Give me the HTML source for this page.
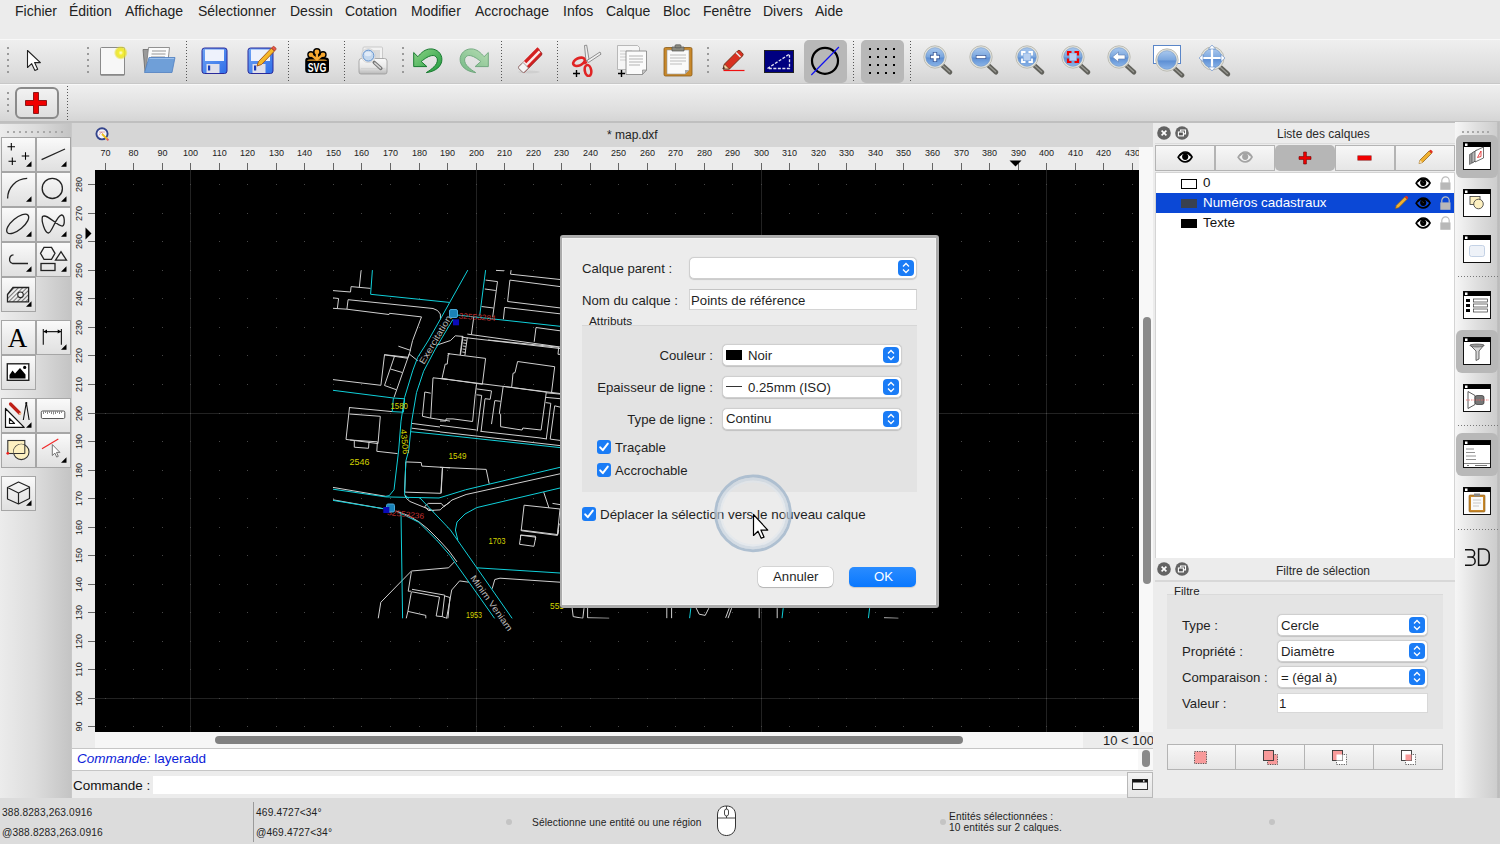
<!DOCTYPE html>
<html><head><meta charset="utf-8">
<style>
*{box-sizing:border-box}
body{margin:0;width:1500px;height:844px;position:relative;overflow:hidden;background:#ececec;font-family:"Liberation Sans",sans-serif;color:#1e1e1e}
.a{position:absolute}
.t{position:absolute;white-space:pre;line-height:1}
.menu{font-size:14px;color:#222;top:4px}
.tb{position:absolute;left:0;width:1500px;background:linear-gradient(#efefef,#dedede 70%,#d4d4d4);border-top:1px solid #f8f8f8;border-bottom:1px solid #c8c8c8}
.sepd{position:absolute;width:2px;background:repeating-linear-gradient(#9a9a9a 0 2px,transparent 2px 6px)}
.sepf{position:absolute;width:1px;background:repeating-linear-gradient(#555 0 1px,transparent 1px 3px)}
.tool{position:absolute;width:35px;height:35px;border:1px solid #a6a6a6;background:linear-gradient(#fafafa,#ececec 50%,#e0e0e0)}
.combo{position:absolute;background:#fff;border:1px solid #cfcfcf;border-radius:5px;box-shadow:0 0.5px 1px rgba(0,0,0,.15)}
.step{position:absolute;right:2px;top:2px;width:16px;bottom:2px;background:#1a7cf6;border-radius:4px}
.lbl{font-size:13.2px;color:#1f1f1f}
.rl{font-size:9px;color:#222}
.cb{position:absolute;width:14px;height:14px;background:#1a7cf6;border-radius:3px}
</style></head><body>
<!-- MENU -->
<div class="t menu" style="left:15px">Fichier</div>
<div class="t menu" style="left:69px">Édition</div>
<div class="t menu" style="left:125px">Affichage</div>
<div class="t menu" style="left:198px">Sélectionner</div>
<div class="t menu" style="left:290px">Dessin</div>
<div class="t menu" style="left:345px">Cotation</div>
<div class="t menu" style="left:411px">Modifier</div>
<div class="t menu" style="left:475px">Accrochage</div>
<div class="t menu" style="left:563px">Infos</div>
<div class="t menu" style="left:606px">Calque</div>
<div class="t menu" style="left:663px">Bloc</div>
<div class="t menu" style="left:703px">Fenêtre</div>
<div class="t menu" style="left:763px">Divers</div>
<div class="t menu" style="left:815px">Aide</div>

<!-- TOOLBARS -->
<div class="tb" style="top:39px;height:45px"></div>
<div class="tb" style="top:84px;height:39px"></div>

<svg width="0" height="0" style="position:absolute">
<defs>
<linearGradient id="gBlueLens" x1="0" y1="0" x2="0" y2="1"><stop offset="0" stop-color="#a9c8ee"/><stop offset="0.5" stop-color="#7aa6de"/><stop offset="0.55" stop-color="#5d8fd4"/><stop offset="1" stop-color="#8ab4e8"/></linearGradient>
<linearGradient id="gGreen" x1="0" y1="0" x2="1" y2="1"><stop offset="0" stop-color="#8fd488"/><stop offset="1" stop-color="#1d9a3c"/></linearGradient>
<linearGradient id="gFloppy" x1="0" y1="0" x2="1" y2="1"><stop offset="0" stop-color="#6fa4f4"/><stop offset="1" stop-color="#2f6ee8"/></linearGradient>
<radialGradient id="gGlow"><stop offset="0" stop-color="#fffde0"/><stop offset="0.35" stop-color="#f4ee30"/><stop offset="0.7" stop-color="#e8e020" stop-opacity=".8"/><stop offset="1" stop-color="#e8e020" stop-opacity="0"/></radialGradient>
<symbol id="lens" viewBox="0 0 32 32"><path d="M19 20l8 7.2" stroke="#62625c" stroke-width="4.6" stroke-linecap="round"/><path d="M19.8 20.6l6.8 6.2" stroke="#9a9a94" stroke-width="1.2" stroke-linecap="round"/><circle cx="12" cy="12" r="11.2" fill="#e4e4dc" stroke="#b8b8b0" stroke-width="0.9"/><circle cx="12" cy="12" r="9.3" fill="url(#gBlueLens)" stroke="#6f94c4" stroke-width="0.6"/></symbol>
</defs></svg>
<!-- toolbar 1 separators -->
<div class="sepd" style="left:7px;top:47px;height:28px"></div>
<div class="sepd" style="left:87px;top:47px;height:28px"></div>
<div class="sepf" style="left:186px;top:41px;height:41px"></div>
<div class="sepf" style="left:288px;top:41px;height:41px"></div>
<div class="sepf" style="left:344px;top:41px;height:41px"></div>
<div class="sepd" style="left:402px;top:47px;height:28px"></div>
<div class="sepf" style="left:501px;top:41px;height:41px"></div>
<div class="sepf" style="left:557px;top:41px;height:41px"></div>
<div class="sepd" style="left:707px;top:47px;height:28px"></div>
<div class="sepf" style="left:853px;top:41px;height:41px"></div>
<div class="sepf" style="left:910px;top:41px;height:41px"></div>
<!-- select arrow -->
<svg class="a" style="left:26px;top:49px" width="16" height="24" viewBox="0 0 16 24"><path d="M1.5 1.5v17l4.2-3.8 3.2 6.8 2.8-1.3-3.1-6.6h5.8z" fill="#fff" stroke="#222" stroke-width="1.1" stroke-linejoin="round"/></svg>
<!-- new doc -->
<svg class="a" style="left:98px;top:45px" width="30" height="32" viewBox="0 0 30 32"><rect x="2.5" y="2.5" width="24" height="27.5" rx="1" fill="#f2f2f2" stroke="#8a8a8a" stroke-width="1"/><rect x="3" y="3" width="23" height="26.5" fill="#fafafa" opacity=".6"/><path d="M2.5 29.8h24" stroke="#777" stroke-width="1.2"/><circle cx="22.8" cy="7.8" r="7" fill="url(#gGlow)"/></svg>
<!-- open -->
<svg class="a" style="left:142px;top:46px" width="34" height="29" viewBox="0 0 34 29"><path d="M1 3.5h6l1 2h5v20H3z" fill="#9a9a9a" stroke="#666" stroke-width=".8"/><path d="M6.5 1.5h21l-2 18h-21z" fill="#fbfbfb" stroke="#777" stroke-width=".8"/><path d="M10 5h14M9.5 8h14M9 11h14" stroke="#b8b8b8" stroke-width="1.4"/><path d="M7 11.5h26l-3 15H2.5z" fill="#6f9fd8" stroke="#4f7fc0" stroke-width=".8"/><path d="M7.5 12.5h24.5" stroke="#9cc0ec" stroke-width="1"/></svg>
<!-- save -->
<svg class="a" style="left:201px;top:47px" width="27" height="28" viewBox="0 0 27 28"><rect x="1" y="1" width="25" height="25.5" rx="2.5" fill="url(#gFloppy)" stroke="#2a2a9a" stroke-width="1"/><rect x="4" y="2.5" width="19" height="11.5" fill="#eef2fc"/><rect x="5.5" y="17" width="13" height="9" fill="#e0e0ea"/><rect x="7" y="18.5" width="2.2" height="5" fill="#1a3cb8"/></svg>
<!-- save as -->
<svg class="a" style="left:247px;top:45px" width="31" height="30" viewBox="0 0 31 30"><rect x="1" y="3" width="25" height="25.5" rx="2.5" fill="url(#gFloppy)" stroke="#2a2a9a" stroke-width="1"/><rect x="4" y="4.5" width="19" height="11.5" fill="#eef2fc"/><rect x="5.5" y="19" width="13" height="9" fill="#e0e0ea"/><rect x="7" y="20.5" width="2.2" height="5" fill="#1a3cb8"/><path d="M10 21l1.5-4.5 13-13.5 3 3-13 13.5z" fill="#f6b828" stroke="#a0521a" stroke-width=".9"/><path d="M24.5 3l3 3 1.2-1.2a1.3 1.3 0 0 0 0-1.8l-1.2-1.2a1.3 1.3 0 0 0-1.8 0z" fill="#e8584a" stroke="#a0321a" stroke-width=".7"/></svg>
<!-- svg logo -->
<svg class="a" style="left:300px;top:44px" width="35" height="34" viewBox="0 0 35 34"><g stroke="#000" stroke-linecap="round"><path d="M16.9 7.9V15.5M10.9 10.7L16.9 15.5M23 10.7L16.9 15.5" stroke-width="5.5"/></g><circle cx="16.9" cy="7.9" r="3.9" fill="#000"/><circle cx="10.9" cy="10.7" r="3.7" fill="#000"/><circle cx="23" cy="10.7" r="3.7" fill="#000"/><rect x="5.2" y="13.6" width="23.8" height="15.3" rx="3.2" fill="#000"/><g stroke="#f6a830" stroke-linecap="round"><path d="M16.9 7.9V15.5M10.9 10.7L16.9 15.5M23 10.7L16.9 15.5" stroke-width="2.3"/></g><circle cx="16.9" cy="7.9" r="2.4" fill="#f6a830"/><circle cx="10.9" cy="10.7" r="2.3" fill="#f6a830"/><circle cx="23" cy="10.7" r="2.3" fill="#f6a830"/><path d="M6.8 16.8Q8 15.2 11 15.4H23Q26 15.2 27.4 16.8z" fill="#f6a830"/><text x="17" y="28" text-anchor="middle" font-family="Liberation Sans" font-weight="bold" font-size="13" fill="#fff" textLength="18.5" lengthAdjust="spacingAndGlyphs">SVG</text></svg>
<!-- print preview -->
<svg class="a" style="left:358px;top:46px" width="30" height="30" viewBox="0 0 30 30"><defs><linearGradient id="gPr" x1="0" y1="0" x2="0" y2="1"><stop offset="0" stop-color="#fafafa"/><stop offset=".55" stop-color="#e8e8e8"/><stop offset="1" stop-color="#b8b8b8"/></linearGradient></defs><rect x="5" y="1" width="19.5" height="14" rx="1" fill="#f2f2f2" stroke="#c0c0c0" stroke-width=".8"/><rect x="12" y="4" width="10" height="9" fill="#dcdcdc"/><path d="M1 15a2.5 2.5 0 0 1 2.5-2.5h23a2.5 2.5 0 0 1 2.5 2.5v11a2 2 0 0 1-2 2H3a2 2 0 0 1-2-2z" fill="url(#gPr)" stroke="#9a9a9a" stroke-width=".8"/><path d="M3 22.5h24" stroke="#d0d0d0" stroke-width=".8"/><path d="M16.3 16.5l6.5 5.8" stroke="#777" stroke-width="3.6" stroke-linecap="round"/><path d="M16.8 17l5.6 5" stroke="#d8d8d8" stroke-width="1.6" stroke-linecap="round"/><circle cx="10.4" cy="9.6" r="7" fill="#f0f0f0" stroke="#c8c8c8" stroke-width=".7"/><circle cx="10.4" cy="9.6" r="5.5" fill="#c4d8ee" stroke="#5f8fcc" stroke-width="1"/><ellipse cx="10" cy="8" rx="3.5" ry="2.2" fill="#e8f0fa" opacity=".8"/></svg>
<!-- undo -->
<svg class="a" style="left:413px;top:48px" width="30" height="26" viewBox="0 0 30 26"><path d="M0.7 18.6V4.5L4.9 8.7C8 5 12 0.9 17.8 0.9C24 0.9 28.9 5.5 28.9 11.4C28.9 18 23 23.5 13.3 24.6C19 21 24.4 17 24.4 12C24.4 9.5 22.5 7.5 20.2 7.5C16 7.5 12 10.5 8.2 13.5L13.9 18.6Z" fill="url(#gGreen)" stroke="#187a30" stroke-width="1" stroke-linejoin="round"/></svg>
<!-- redo -->
<svg class="a" style="left:459px;top:48px" width="30" height="26" viewBox="0 0 30 26" opacity=".55"><g transform="translate(30,0) scale(-1,1)"><path d="M0.7 18.6V4.5L4.9 8.7C8 5 12 0.9 17.8 0.9C24 0.9 28.9 5.5 28.9 11.4C28.9 18 23 23.5 13.3 24.6C19 21 24.4 17 24.4 12C24.4 9.5 22.5 7.5 20.2 7.5C16 7.5 12 10.5 8.2 13.5L13.9 18.6Z" fill="url(#gGreen)" stroke="#187a30" stroke-width="1" stroke-linejoin="round"/></g></svg>
<!-- eraser -->
<svg class="a" style="left:516px;top:47px" width="28" height="28" viewBox="0 0 28 28"><ellipse cx="13" cy="25" rx="11" ry="1.5" fill="#ccc" opacity=".8"/><path d="M3 19.5L19.5 2.5a2 2 0 0 1 2.8 0l3 3a2 2 0 0 1 0 2.8L8.8 25a1.5 1.5 0 0 1-2.1 0L3 21.6a1.5 1.5 0 0 1 0-2.1z" fill="#d42020" stroke="#8a1010" stroke-width=".8"/><path d="M5.5 16.5l15-15.2 4 4-15 15.2z" fill="#fff" opacity=".9"/><path d="M8 14l13.5-13.7 2.3 2.3L10.3 16.3z" fill="#d42020"/><path d="M3 19.5l4-4 5.5 5.5-4 4a1.5 1.5 0 0 1-2.1 0L3 21.6a1.5 1.5 0 0 1 0-2.1z" fill="#f4f4f4" stroke="#8a8a8a" stroke-width=".8"/></svg>
<!-- scissors -->
<svg class="a" style="left:571px;top:44px" width="31" height="33" viewBox="0 0 31 33"><path d="M15 17L13.5 1.5l2.2-.3 2.3 14.3z" fill="#f0f0f0" stroke="#777" stroke-width=".8"/><path d="M16 16.5L29 8l1 2.2-12.5 8.3z" fill="#f0f0f0" stroke="#777" stroke-width=".8"/><ellipse cx="8" cy="17.8" rx="6.2" ry="3.6" transform="rotate(-25 8 17.8)" fill="none" stroke="#e02424" stroke-width="2.6"/><ellipse cx="17" cy="26.5" rx="3.2" ry="5.5" transform="rotate(-10 17 26.5)" fill="none" stroke="#e02424" stroke-width="2.6"/><path d="M13 19.5l3 -1.5" stroke="#e02424" stroke-width="2.5"/><path d="M5.5 26v7M2 29.5h7" stroke="#000" stroke-width="1.4"/></svg>
<!-- copy -->
<svg class="a" style="left:616px;top:44px" width="33" height="34" viewBox="0 0 33 34"><path d="M1.5 1.5h20l2 2v22h-22z" fill="#f6f6f6" stroke="#aaa" stroke-width=".8"/><path d="M4 7h12M4 10h12M4 13h12M4 16h12" stroke="#ccc" stroke-width="1.1"/><path d="M10 7h20.5v19l-4 4.5H10z" fill="#fbfbfb" stroke="#8a8a8a" stroke-width=".9"/><path d="M13 12h14M13 15h14M13 18h14M13 21h11" stroke="#b4b4b4" stroke-width="1.1"/><path d="M26.5 30.5v-4.5h4z" fill="#c8c8c8" stroke="#8a8a8a" stroke-width=".7"/><path d="M5.5 26v7M2 29.5h7" stroke="#000" stroke-width="1.4"/></svg>
<!-- paste -->
<svg class="a" style="left:663px;top:44px" width="30" height="33" viewBox="0 0 30 33"><rect x="1" y="3.5" width="28" height="28.5" rx="1.5" fill="#c8882a" stroke="#8a5a18" stroke-width=".8"/><path d="M4 6h22v20l-4 4H4z" fill="#fafafa" stroke="#999" stroke-width=".6"/><path d="M7 11h16M7 14h16M7 17h16M7 20h12" stroke="#bbb" stroke-width="1.1"/><path d="M22 30v-4h4z" fill="#aaa"/><path d="M9 3h12v4H9z" fill="#8a8a80" stroke="#555" stroke-width=".7"/><rect x="12" y="0.8" width="6" height="3" rx="1" fill="#8a8a80" stroke="#555" stroke-width=".7"/></svg>
<!-- pencil line -->
<svg class="a" style="left:721px;top:49px" width="24" height="24" viewBox="0 0 24 24"><path d="M2.5 21.5h21" stroke="#f01010" stroke-width="1.2"/><path d="M2 20l1.5-5L16.5 2a2 2 0 0 1 2.8 0l2.2 2.2a2 2 0 0 1 0 2.8L8.5 20z" fill="#d83020" stroke="#6a2a10" stroke-width=".9"/><path d="M15 3.5l4.5 4.5" stroke="#e8e8e8" stroke-width="1.6"/><path d="M2 20l1.5-5 5 5z" fill="#f2d2a0" stroke="#6a2a10" stroke-width=".7"/><path d="M2 20l.7-2.3 1.6 1.6z" fill="#222"/></svg>
<!-- blue rect -->
<svg class="a" style="left:764px;top:50px" width="30" height="23" viewBox="0 0 30 23"><rect x="0.5" y="0.5" width="29" height="22" fill="#000080" stroke="#222" stroke-width="1"/><path d="M3.5 18.5L25.5 4v14.5z" fill="none" stroke="#e0e0f0" stroke-width="1.3" stroke-dasharray="3 1.5"/></svg>
<!-- active circle -->
<div class="a" style="left:804px;top:40px;width:43px;height:43px;background:#b8b8b8;border-radius:5px"></div>
<svg class="a" style="left:809px;top:45px" width="32" height="32" viewBox="0 0 32 32"><circle cx="16" cy="15.8" r="13" fill="none" stroke="#000" stroke-width="2.2"/><path d="M2.3 30L29.9 2" stroke="#1010f0" stroke-width="1.2"/></svg>
<!-- grid -->
<div class="a" style="left:861px;top:40px;width:43px;height:43px;background:#b8b8b8;border-radius:5px"></div>
<svg class="a" style="left:868px;top:47px" width="28" height="28"><g fill="#000"><rect x="1" y="1" width="2" height="2"/><rect x="9" y="1" width="2" height="2"/><rect x="17" y="1" width="2" height="2"/><rect x="25" y="1" width="2" height="2"/><rect x="1" y="9" width="2" height="2"/><rect x="9" y="9" width="2" height="2"/><rect x="17" y="9" width="2" height="2"/><rect x="25" y="9" width="2" height="2"/><rect x="1" y="17" width="2" height="2"/><rect x="9" y="17" width="2" height="2"/><rect x="17" y="17" width="2" height="2"/><rect x="25" y="17" width="2" height="2"/><rect x="1" y="25" width="2" height="2"/><rect x="9" y="25" width="2" height="2"/><rect x="17" y="25" width="2" height="2"/><rect x="25" y="25" width="2" height="2"/></g></svg>
<!-- zoom in -->
<svg class="a" style="left:923px;top:45px" width="32" height="32" viewBox="0 0 32 32"><use href="#lens"/><path d="M12 7v10M7 12h10" stroke="#3a5a9a" stroke-width="4.4"/><path d="M12 7.8v8.4M7.8 12h8.4" stroke="#fff" stroke-width="2.6"/></svg>
<svg class="a" style="left:969px;top:45px" width="32" height="32" viewBox="0 0 32 32"><use href="#lens"/><path d="M6.8 12h10.4" stroke="#3a5a9a" stroke-width="4"/><path d="M7.5 12h9" stroke="#fff" stroke-width="2.4"/></svg>
<svg class="a" style="left:1015px;top:45px" width="32" height="32" viewBox="0 0 32 32"><use href="#lens"/><rect x="8.5" y="8.5" width="7" height="7" fill="#b8d0f0"/><path d="M7 10.5V7h3.5M13.5 7H17v3.5M17 13.5V17h-3.5M10.5 17H7v-3.5" fill="none" stroke="#fff" stroke-width="1.8"/></svg>
<svg class="a" style="left:1061px;top:45px" width="32" height="32" viewBox="0 0 32 32"><use href="#lens"/><rect x="8.5" y="8.5" width="7" height="7" fill="#b8d0f0"/><path d="M7 10.5V7h3.5M13.5 7H17v3.5M17 13.5V17h-3.5M10.5 17H7v-3.5" fill="none" stroke="#f00000" stroke-width="2.2"/></svg>
<svg class="a" style="left:1107px;top:45px" width="32" height="32" viewBox="0 0 32 32"><use href="#lens"/><path d="M5.5 12l6-5v3h6.5v4h-6.5v3z" fill="#fff" stroke="#5a7ab0" stroke-width=".6"/></svg>
<svg class="a" style="left:1152px;top:44px" width="34" height="34" viewBox="0 0 34 34"><rect x="1.5" y="1.5" width="27" height="18" fill="#fff" stroke="#5a86c8" stroke-width="1"/><g transform="translate(3,4)"><use href="#lens" width="32" height="32"/></g></svg>
<svg class="a" style="left:1199px;top:45px" width="33" height="33" viewBox="0 0 33 33"><use href="#lens" x="1" y="1"/><path d="M13 1v24M1 13h24" stroke="#fff" stroke-width="2.2"/><path d="M13 0l-3.5 4h7zM13 26l-3.5-4h7zM0 13l4-3.5v7zM26 13l-4-3.5v7z" fill="#fff" stroke="#5a86c8" stroke-width=".6"/></svg>
<!-- toolbar 2 -->
<div class="sepd" style="left:7px;top:92px;height:22px"></div>
<div class="a" style="left:15px;top:87px;width:44px;height:32px;border:2px solid #8a8a8a;border-radius:6px;background:linear-gradient(#f2f2f2,#dedede)"></div>
<svg class="a" style="left:25px;top:92px" width="22" height="22" viewBox="0 0 22 22"><path d="M8.5 0.5h5v8h8v5h-8v8h-5v-8h-8v-5h8z" fill="#f00000" stroke="#700" stroke-width=".8"/></svg>
<div class="sepf" style="left:67px;top:86px;height:34px"></div>

<!-- LEFT TOOLBOX -->
<div class="a" style="left:0;top:122px;width:71px;height:676px;background:linear-gradient(90deg,#ececec,#dcdcdc 50%,#c4c4c4)"></div>

<!-- LEFT TOOLBOX ICONS -->
<div class="a" style="left:0;top:122px;width:71px;height:2px;background:#c4c4c4"></div>
<div class="a" style="left:7px;top:131px;width:58px;height:2px;background:repeating-linear-gradient(90deg,#a8a8a8 0 2px,transparent 2px 6px)"></div>
<div class="tool" style="left:1px;top:137px"></div><div class="tool" style="left:36px;top:137px"></div>
<div class="tool" style="left:1px;top:172px"></div><div class="tool" style="left:36px;top:172px"></div>
<div class="tool" style="left:1px;top:207px"></div><div class="tool" style="left:36px;top:207px"></div>
<div class="tool" style="left:1px;top:242px"></div><div class="tool" style="left:36px;top:242px"></div>
<div class="tool" style="left:1px;top:277px"></div>
<div class="tool" style="left:1px;top:320px"></div><div class="tool" style="left:36px;top:320px"></div>
<div class="tool" style="left:1px;top:355px"></div>
<div class="tool" style="left:1px;top:398px"></div><div class="tool" style="left:36px;top:398px"></div>
<div class="tool" style="left:1px;top:433px"></div><div class="tool" style="left:36px;top:433px"></div>
<div class="tool" style="left:1px;top:476px"></div>
<svg class="a" style="left:0;top:122px" width="72" height="400" viewBox="0 122 72 400">
<g fill="#000">
<path d="M26 166.8h5.5v-5.5z"/><path d="M61 166.8h5.5v-5.5z"/>
<path d="M26 201.8h5.5v-5.5z"/><path d="M61 201.8h5.5v-5.5z"/>
<path d="M26 236.8h5.5v-5.5z"/><path d="M61 236.8h5.5v-5.5z"/>
<path d="M26 271.8h5.5v-5.5z"/><path d="M61 271.8h5.5v-5.5z"/>
<path d="M26 306.8h5.5v-5.5z"/>
<path d="M61 349.8h5.5v-5.5z"/>
<path d="M26 427.8h5.5v-5.5z"/>
<path d="M61 462.8h5.5v-5.5z"/>
<path d="M26 505.8h5.5v-5.5z"/>
</g>
<g fill="none" stroke="#222" stroke-width="1.3">
<path d="M11.3 143v7.5M7.5 146.7h7.5M25.5 152.3v7.5M21.7 156h7.5M12.3 157.5v7.5M8.5 161.2h7.5" stroke="#000" stroke-width="1.05"/>
<path d="M41.6 159.6L65 149"/>
<path d="M7.6 198.5A20 20 0 0 1 27.2 178.4"/>
<circle cx="52.3" cy="188.4" r="10.1"/>
<ellipse cx="17.7" cy="223.9" rx="13.5" ry="5.8" transform="rotate(-40 17.7 223.9)"/>
<path d="M42.5 216.5C41 221 45 233 48.5 233 52 233 56 216 61.5 215 65 214.5 65 225 62.5 226 58 227 47 213 42.5 216.5z"/>
<path d="M13.5 254.8C9 255 8 262 12.5 263.5H28"/>
<path d="M40.5 253.3l3.5-6h7.5l3.5 6-3.5 6h-7.5z M55.5 260.2l5.5-8.5 5.5 8.5z"/>
<rect x="41" y="263.5" width="14" height="7"/>
</g>
<defs><pattern id="hatch" width="3" height="3" patternUnits="userSpaceOnUse" patternTransform="rotate(45)"><rect width="1" height="3" fill="#777"/></pattern></defs>
<path d="M7.5 294.5l5.5-7h15.6v14.3H7.5z" fill="url(#hatch)" stroke="#222" stroke-width="1.3"/>
<circle cx="20.5" cy="294.8" r="2.8" fill="#f4f4f4" stroke="#222" stroke-width="1.1"/>
<text x="17.5" y="347.3" text-anchor="middle" font-family="Liberation Serif" font-size="27" fill="#000">A</text>
<path d="M43.3 329v15.7M61.4 329v15.7M43.5 331.6h17.7" fill="none" stroke="#222" stroke-width="1.2"/>
<path d="M43.5 331.6l3.5-2v4zM61.2 331.6l-3.5-2v4z" fill="#000"/>
<rect x="7.3" y="363.8" width="21.5" height="16.5" fill="#fff" stroke="#222" stroke-width="1.4"/>
<path d="M9.5 378.5v-3.5l3-4.5 2.5 3 5-5.5 5.5 6.5v4z" fill="#000"/>
<circle cx="24.7" cy="367.4" r="1.6" fill="#000"/>
<path d="M5.5 408.5v18.9h18.7z M9.5 418.5v5h5z" fill="#fff" stroke="#111" stroke-width="1.2" stroke-linejoin="round"/>
<path d="M10.5 404l9 9" stroke="#c02018" stroke-width="3.2" stroke-linecap="round"/><path d="M19.5 413l1.5 1.5" stroke="#f0c090" stroke-width="2.2"/>
<path d="M26.3 402.5l-3 17.5M26.3 402.5l2.8 17.5" fill="none" stroke="#111" stroke-width="1.1"/><circle cx="26.3" cy="403" r="1.1" fill="#111"/>
<rect x="41.3" y="411" width="23.5" height="7.5" rx="1.3" fill="#fff" stroke="#555" stroke-width="1"/>
<path d="M43.5 411.5v2.5M45.5 411.5v1.5M47.5 411.5v2.5M49.5 411.5v1.5M51.5 411.5v2.5M53.5 411.5v3M55.5 411.5v2.5M57.5 411.5v1.5M59.5 411.5v2.5M61.5 411.5v1.5" stroke="#555" stroke-width=".7"/>
<rect x="7.8" y="440.5" width="17" height="13" fill="#fdf0c0" stroke="#333" stroke-width="1.1"/>
<circle cx="21.3" cy="451.9" r="7.7" fill="#fdf0c0" fill-opacity=".95" stroke="#333" stroke-width="1.1"/>
<path d="M13.6 451.9A7.7 7.7 0 0 1 24.8 445.2V453.5H13.7z" fill="#fdf0c0"/><path d="M13.6 453.5H24.8V444.7" fill="none" stroke="#333" stroke-width="1"/>
<circle cx="7.8" cy="453.3" r="1.4" fill="#f02020"/>
<path d="M42 448.8l16.3-9.7" stroke="#f02828" stroke-width="1.2"/>
<path d="M52.3 444.5v11l2.6-2.4 1.8 4 1.6-.8-1.8-3.9h3.4z" fill="#fff" stroke="#666" stroke-width=".9"/>
<path d="M7.5 487.5l11-5.5 11 5v11.5l-11 5.5-11-5z M7.5 487.5l11 5.5 11-5.5 M18.5 493v11" fill="none" stroke="#222" stroke-width="1.2" stroke-linejoin="round"/>
</svg>

<!-- DOC WINDOW -->
<div class="a" style="left:71px;top:122px;width:1083px;height:676px;background:#ececec;border-left:1px solid #c8c8c8"></div>
<div class="a" style="left:72px;top:122px;width:1081px;height:25px;background:#d6d6d6"></div>
<div class="t" style="left:607px;top:129px;font-size:12px;color:#1e1e1e">* map.dxf</div>
<div class="a" style="left:72px;top:147px;width:1081px;height:23px;background:#ececec"></div>
<div class="a" style="left:72px;top:170px;width:23px;height:562px;background:#ececec"></div>
<svg class="a" style="left:95px;top:170px" width="1044" height="562" viewBox="95 170 1044 562">
<rect x="95" y="170" width="1044" height="562" fill="#000"/>
<rect x="190" y="170" width="1" height="562" fill="#222"/><rect x="476" y="170" width="1" height="562" fill="#222"/><rect x="761" y="170" width="1" height="562" fill="#222"/><rect x="1046" y="170" width="1" height="562" fill="#222"/><rect x="95" y="698" width="1044" height="1" fill="#222"/><rect x="95" y="413" width="1044" height="1" fill="#222"/><path fill="#474747" d="M105 726h1v1h-1zM105 698h1v1h-1zM105 669h1v1h-1zM105 641h1v1h-1zM105 612h1v1h-1zM105 584h1v1h-1zM105 555h1v1h-1zM105 527h1v1h-1zM105 498h1v1h-1zM105 470h1v1h-1zM105 441h1v1h-1zM105 413h1v1h-1zM105 384h1v1h-1zM105 355h1v1h-1zM105 327h1v1h-1zM105 298h1v1h-1zM105 270h1v1h-1zM105 241h1v1h-1zM105 213h1v1h-1zM105 184h1v1h-1zM133 726h1v1h-1zM133 698h1v1h-1zM133 669h1v1h-1zM133 641h1v1h-1zM133 612h1v1h-1zM133 584h1v1h-1zM133 555h1v1h-1zM133 527h1v1h-1zM133 498h1v1h-1zM133 470h1v1h-1zM133 441h1v1h-1zM133 413h1v1h-1zM133 384h1v1h-1zM133 355h1v1h-1zM133 327h1v1h-1zM133 298h1v1h-1zM133 270h1v1h-1zM133 241h1v1h-1zM133 213h1v1h-1zM133 184h1v1h-1zM162 726h1v1h-1zM162 698h1v1h-1zM162 669h1v1h-1zM162 641h1v1h-1zM162 612h1v1h-1zM162 584h1v1h-1zM162 555h1v1h-1zM162 527h1v1h-1zM162 498h1v1h-1zM162 470h1v1h-1zM162 441h1v1h-1zM162 413h1v1h-1zM162 384h1v1h-1zM162 355h1v1h-1zM162 327h1v1h-1zM162 298h1v1h-1zM162 270h1v1h-1zM162 241h1v1h-1zM162 213h1v1h-1zM162 184h1v1h-1zM190 726h1v1h-1zM190 698h1v1h-1zM190 669h1v1h-1zM190 641h1v1h-1zM190 612h1v1h-1zM190 584h1v1h-1zM190 555h1v1h-1zM190 527h1v1h-1zM190 498h1v1h-1zM190 470h1v1h-1zM190 441h1v1h-1zM190 413h1v1h-1zM190 384h1v1h-1zM190 355h1v1h-1zM190 327h1v1h-1zM190 298h1v1h-1zM190 270h1v1h-1zM190 241h1v1h-1zM190 213h1v1h-1zM190 184h1v1h-1zM219 726h1v1h-1zM219 698h1v1h-1zM219 669h1v1h-1zM219 641h1v1h-1zM219 612h1v1h-1zM219 584h1v1h-1zM219 555h1v1h-1zM219 527h1v1h-1zM219 498h1v1h-1zM219 470h1v1h-1zM219 441h1v1h-1zM219 413h1v1h-1zM219 384h1v1h-1zM219 355h1v1h-1zM219 327h1v1h-1zM219 298h1v1h-1zM219 270h1v1h-1zM219 241h1v1h-1zM219 213h1v1h-1zM219 184h1v1h-1zM247 726h1v1h-1zM247 698h1v1h-1zM247 669h1v1h-1zM247 641h1v1h-1zM247 612h1v1h-1zM247 584h1v1h-1zM247 555h1v1h-1zM247 527h1v1h-1zM247 498h1v1h-1zM247 470h1v1h-1zM247 441h1v1h-1zM247 413h1v1h-1zM247 384h1v1h-1zM247 355h1v1h-1zM247 327h1v1h-1zM247 298h1v1h-1zM247 270h1v1h-1zM247 241h1v1h-1zM247 213h1v1h-1zM247 184h1v1h-1zM276 726h1v1h-1zM276 698h1v1h-1zM276 669h1v1h-1zM276 641h1v1h-1zM276 612h1v1h-1zM276 584h1v1h-1zM276 555h1v1h-1zM276 527h1v1h-1zM276 498h1v1h-1zM276 470h1v1h-1zM276 441h1v1h-1zM276 413h1v1h-1zM276 384h1v1h-1zM276 355h1v1h-1zM276 327h1v1h-1zM276 298h1v1h-1zM276 270h1v1h-1zM276 241h1v1h-1zM276 213h1v1h-1zM276 184h1v1h-1zM304 726h1v1h-1zM304 698h1v1h-1zM304 669h1v1h-1zM304 641h1v1h-1zM304 612h1v1h-1zM304 584h1v1h-1zM304 555h1v1h-1zM304 527h1v1h-1zM304 498h1v1h-1zM304 470h1v1h-1zM304 441h1v1h-1zM304 413h1v1h-1zM304 384h1v1h-1zM304 355h1v1h-1zM304 327h1v1h-1zM304 298h1v1h-1zM304 270h1v1h-1zM304 241h1v1h-1zM304 213h1v1h-1zM304 184h1v1h-1zM333 726h1v1h-1zM333 698h1v1h-1zM333 669h1v1h-1zM333 641h1v1h-1zM333 612h1v1h-1zM333 584h1v1h-1zM333 555h1v1h-1zM333 527h1v1h-1zM333 498h1v1h-1zM333 470h1v1h-1zM333 441h1v1h-1zM333 413h1v1h-1zM333 384h1v1h-1zM333 355h1v1h-1zM333 327h1v1h-1zM333 298h1v1h-1zM333 270h1v1h-1zM333 241h1v1h-1zM333 213h1v1h-1zM333 184h1v1h-1zM361 726h1v1h-1zM361 698h1v1h-1zM361 669h1v1h-1zM361 641h1v1h-1zM361 612h1v1h-1zM361 584h1v1h-1zM361 555h1v1h-1zM361 527h1v1h-1zM361 498h1v1h-1zM361 470h1v1h-1zM361 441h1v1h-1zM361 413h1v1h-1zM361 384h1v1h-1zM361 355h1v1h-1zM361 327h1v1h-1zM361 298h1v1h-1zM361 270h1v1h-1zM361 241h1v1h-1zM361 213h1v1h-1zM361 184h1v1h-1zM390 726h1v1h-1zM390 698h1v1h-1zM390 669h1v1h-1zM390 641h1v1h-1zM390 612h1v1h-1zM390 584h1v1h-1zM390 555h1v1h-1zM390 527h1v1h-1zM390 498h1v1h-1zM390 470h1v1h-1zM390 441h1v1h-1zM390 413h1v1h-1zM390 384h1v1h-1zM390 355h1v1h-1zM390 327h1v1h-1zM390 298h1v1h-1zM390 270h1v1h-1zM390 241h1v1h-1zM390 213h1v1h-1zM390 184h1v1h-1zM419 726h1v1h-1zM419 698h1v1h-1zM419 669h1v1h-1zM419 641h1v1h-1zM419 612h1v1h-1zM419 584h1v1h-1zM419 555h1v1h-1zM419 527h1v1h-1zM419 498h1v1h-1zM419 470h1v1h-1zM419 441h1v1h-1zM419 413h1v1h-1zM419 384h1v1h-1zM419 355h1v1h-1zM419 327h1v1h-1zM419 298h1v1h-1zM419 270h1v1h-1zM419 241h1v1h-1zM419 213h1v1h-1zM419 184h1v1h-1zM447 726h1v1h-1zM447 698h1v1h-1zM447 669h1v1h-1zM447 641h1v1h-1zM447 612h1v1h-1zM447 584h1v1h-1zM447 555h1v1h-1zM447 527h1v1h-1zM447 498h1v1h-1zM447 470h1v1h-1zM447 441h1v1h-1zM447 413h1v1h-1zM447 384h1v1h-1zM447 355h1v1h-1zM447 327h1v1h-1zM447 298h1v1h-1zM447 270h1v1h-1zM447 241h1v1h-1zM447 213h1v1h-1zM447 184h1v1h-1zM476 726h1v1h-1zM476 698h1v1h-1zM476 669h1v1h-1zM476 641h1v1h-1zM476 612h1v1h-1zM476 584h1v1h-1zM476 555h1v1h-1zM476 527h1v1h-1zM476 498h1v1h-1zM476 470h1v1h-1zM476 441h1v1h-1zM476 413h1v1h-1zM476 384h1v1h-1zM476 355h1v1h-1zM476 327h1v1h-1zM476 298h1v1h-1zM476 270h1v1h-1zM476 241h1v1h-1zM476 213h1v1h-1zM476 184h1v1h-1zM504 726h1v1h-1zM504 698h1v1h-1zM504 669h1v1h-1zM504 641h1v1h-1zM504 612h1v1h-1zM504 584h1v1h-1zM504 555h1v1h-1zM504 527h1v1h-1zM504 498h1v1h-1zM504 470h1v1h-1zM504 441h1v1h-1zM504 413h1v1h-1zM504 384h1v1h-1zM504 355h1v1h-1zM504 327h1v1h-1zM504 298h1v1h-1zM504 270h1v1h-1zM504 241h1v1h-1zM504 213h1v1h-1zM504 184h1v1h-1zM533 726h1v1h-1zM533 698h1v1h-1zM533 669h1v1h-1zM533 641h1v1h-1zM533 612h1v1h-1zM533 584h1v1h-1zM533 555h1v1h-1zM533 527h1v1h-1zM533 498h1v1h-1zM533 470h1v1h-1zM533 441h1v1h-1zM533 413h1v1h-1zM533 384h1v1h-1zM533 355h1v1h-1zM533 327h1v1h-1zM533 298h1v1h-1zM533 270h1v1h-1zM533 241h1v1h-1zM533 213h1v1h-1zM533 184h1v1h-1zM561 726h1v1h-1zM561 698h1v1h-1zM561 669h1v1h-1zM561 641h1v1h-1zM561 612h1v1h-1zM561 584h1v1h-1zM561 555h1v1h-1zM561 527h1v1h-1zM561 498h1v1h-1zM561 470h1v1h-1zM561 441h1v1h-1zM561 413h1v1h-1zM561 384h1v1h-1zM561 355h1v1h-1zM561 327h1v1h-1zM561 298h1v1h-1zM561 270h1v1h-1zM561 241h1v1h-1zM561 213h1v1h-1zM561 184h1v1h-1zM590 726h1v1h-1zM590 698h1v1h-1zM590 669h1v1h-1zM590 641h1v1h-1zM590 612h1v1h-1zM590 584h1v1h-1zM590 555h1v1h-1zM590 527h1v1h-1zM590 498h1v1h-1zM590 470h1v1h-1zM590 441h1v1h-1zM590 413h1v1h-1zM590 384h1v1h-1zM590 355h1v1h-1zM590 327h1v1h-1zM590 298h1v1h-1zM590 270h1v1h-1zM590 241h1v1h-1zM590 213h1v1h-1zM590 184h1v1h-1zM618 726h1v1h-1zM618 698h1v1h-1zM618 669h1v1h-1zM618 641h1v1h-1zM618 612h1v1h-1zM618 584h1v1h-1zM618 555h1v1h-1zM618 527h1v1h-1zM618 498h1v1h-1zM618 470h1v1h-1zM618 441h1v1h-1zM618 413h1v1h-1zM618 384h1v1h-1zM618 355h1v1h-1zM618 327h1v1h-1zM618 298h1v1h-1zM618 270h1v1h-1zM618 241h1v1h-1zM618 213h1v1h-1zM618 184h1v1h-1zM647 726h1v1h-1zM647 698h1v1h-1zM647 669h1v1h-1zM647 641h1v1h-1zM647 612h1v1h-1zM647 584h1v1h-1zM647 555h1v1h-1zM647 527h1v1h-1zM647 498h1v1h-1zM647 470h1v1h-1zM647 441h1v1h-1zM647 413h1v1h-1zM647 384h1v1h-1zM647 355h1v1h-1zM647 327h1v1h-1zM647 298h1v1h-1zM647 270h1v1h-1zM647 241h1v1h-1zM647 213h1v1h-1zM647 184h1v1h-1zM675 726h1v1h-1zM675 698h1v1h-1zM675 669h1v1h-1zM675 641h1v1h-1zM675 612h1v1h-1zM675 584h1v1h-1zM675 555h1v1h-1zM675 527h1v1h-1zM675 498h1v1h-1zM675 470h1v1h-1zM675 441h1v1h-1zM675 413h1v1h-1zM675 384h1v1h-1zM675 355h1v1h-1zM675 327h1v1h-1zM675 298h1v1h-1zM675 270h1v1h-1zM675 241h1v1h-1zM675 213h1v1h-1zM675 184h1v1h-1zM704 726h1v1h-1zM704 698h1v1h-1zM704 669h1v1h-1zM704 641h1v1h-1zM704 612h1v1h-1zM704 584h1v1h-1zM704 555h1v1h-1zM704 527h1v1h-1zM704 498h1v1h-1zM704 470h1v1h-1zM704 441h1v1h-1zM704 413h1v1h-1zM704 384h1v1h-1zM704 355h1v1h-1zM704 327h1v1h-1zM704 298h1v1h-1zM704 270h1v1h-1zM704 241h1v1h-1zM704 213h1v1h-1zM704 184h1v1h-1zM732 726h1v1h-1zM732 698h1v1h-1zM732 669h1v1h-1zM732 641h1v1h-1zM732 612h1v1h-1zM732 584h1v1h-1zM732 555h1v1h-1zM732 527h1v1h-1zM732 498h1v1h-1zM732 470h1v1h-1zM732 441h1v1h-1zM732 413h1v1h-1zM732 384h1v1h-1zM732 355h1v1h-1zM732 327h1v1h-1zM732 298h1v1h-1zM732 270h1v1h-1zM732 241h1v1h-1zM732 213h1v1h-1zM732 184h1v1h-1zM761 726h1v1h-1zM761 698h1v1h-1zM761 669h1v1h-1zM761 641h1v1h-1zM761 612h1v1h-1zM761 584h1v1h-1zM761 555h1v1h-1zM761 527h1v1h-1zM761 498h1v1h-1zM761 470h1v1h-1zM761 441h1v1h-1zM761 413h1v1h-1zM761 384h1v1h-1zM761 355h1v1h-1zM761 327h1v1h-1zM761 298h1v1h-1zM761 270h1v1h-1zM761 241h1v1h-1zM761 213h1v1h-1zM761 184h1v1h-1zM789 726h1v1h-1zM789 698h1v1h-1zM789 669h1v1h-1zM789 641h1v1h-1zM789 612h1v1h-1zM789 584h1v1h-1zM789 555h1v1h-1zM789 527h1v1h-1zM789 498h1v1h-1zM789 470h1v1h-1zM789 441h1v1h-1zM789 413h1v1h-1zM789 384h1v1h-1zM789 355h1v1h-1zM789 327h1v1h-1zM789 298h1v1h-1zM789 270h1v1h-1zM789 241h1v1h-1zM789 213h1v1h-1zM789 184h1v1h-1zM818 726h1v1h-1zM818 698h1v1h-1zM818 669h1v1h-1zM818 641h1v1h-1zM818 612h1v1h-1zM818 584h1v1h-1zM818 555h1v1h-1zM818 527h1v1h-1zM818 498h1v1h-1zM818 470h1v1h-1zM818 441h1v1h-1zM818 413h1v1h-1zM818 384h1v1h-1zM818 355h1v1h-1zM818 327h1v1h-1zM818 298h1v1h-1zM818 270h1v1h-1zM818 241h1v1h-1zM818 213h1v1h-1zM818 184h1v1h-1zM846 726h1v1h-1zM846 698h1v1h-1zM846 669h1v1h-1zM846 641h1v1h-1zM846 612h1v1h-1zM846 584h1v1h-1zM846 555h1v1h-1zM846 527h1v1h-1zM846 498h1v1h-1zM846 470h1v1h-1zM846 441h1v1h-1zM846 413h1v1h-1zM846 384h1v1h-1zM846 355h1v1h-1zM846 327h1v1h-1zM846 298h1v1h-1zM846 270h1v1h-1zM846 241h1v1h-1zM846 213h1v1h-1zM846 184h1v1h-1zM875 726h1v1h-1zM875 698h1v1h-1zM875 669h1v1h-1zM875 641h1v1h-1zM875 612h1v1h-1zM875 584h1v1h-1zM875 555h1v1h-1zM875 527h1v1h-1zM875 498h1v1h-1zM875 470h1v1h-1zM875 441h1v1h-1zM875 413h1v1h-1zM875 384h1v1h-1zM875 355h1v1h-1zM875 327h1v1h-1zM875 298h1v1h-1zM875 270h1v1h-1zM875 241h1v1h-1zM875 213h1v1h-1zM875 184h1v1h-1zM903 726h1v1h-1zM903 698h1v1h-1zM903 669h1v1h-1zM903 641h1v1h-1zM903 612h1v1h-1zM903 584h1v1h-1zM903 555h1v1h-1zM903 527h1v1h-1zM903 498h1v1h-1zM903 470h1v1h-1zM903 441h1v1h-1zM903 413h1v1h-1zM903 384h1v1h-1zM903 355h1v1h-1zM903 327h1v1h-1zM903 298h1v1h-1zM903 270h1v1h-1zM903 241h1v1h-1zM903 213h1v1h-1zM903 184h1v1h-1zM932 726h1v1h-1zM932 698h1v1h-1zM932 669h1v1h-1zM932 641h1v1h-1zM932 612h1v1h-1zM932 584h1v1h-1zM932 555h1v1h-1zM932 527h1v1h-1zM932 498h1v1h-1zM932 470h1v1h-1zM932 441h1v1h-1zM932 413h1v1h-1zM932 384h1v1h-1zM932 355h1v1h-1zM932 327h1v1h-1zM932 298h1v1h-1zM932 270h1v1h-1zM932 241h1v1h-1zM932 213h1v1h-1zM932 184h1v1h-1zM961 726h1v1h-1zM961 698h1v1h-1zM961 669h1v1h-1zM961 641h1v1h-1zM961 612h1v1h-1zM961 584h1v1h-1zM961 555h1v1h-1zM961 527h1v1h-1zM961 498h1v1h-1zM961 470h1v1h-1zM961 441h1v1h-1zM961 413h1v1h-1zM961 384h1v1h-1zM961 355h1v1h-1zM961 327h1v1h-1zM961 298h1v1h-1zM961 270h1v1h-1zM961 241h1v1h-1zM961 213h1v1h-1zM961 184h1v1h-1zM989 726h1v1h-1zM989 698h1v1h-1zM989 669h1v1h-1zM989 641h1v1h-1zM989 612h1v1h-1zM989 584h1v1h-1zM989 555h1v1h-1zM989 527h1v1h-1zM989 498h1v1h-1zM989 470h1v1h-1zM989 441h1v1h-1zM989 413h1v1h-1zM989 384h1v1h-1zM989 355h1v1h-1zM989 327h1v1h-1zM989 298h1v1h-1zM989 270h1v1h-1zM989 241h1v1h-1zM989 213h1v1h-1zM989 184h1v1h-1zM1018 726h1v1h-1zM1018 698h1v1h-1zM1018 669h1v1h-1zM1018 641h1v1h-1zM1018 612h1v1h-1zM1018 584h1v1h-1zM1018 555h1v1h-1zM1018 527h1v1h-1zM1018 498h1v1h-1zM1018 470h1v1h-1zM1018 441h1v1h-1zM1018 413h1v1h-1zM1018 384h1v1h-1zM1018 355h1v1h-1zM1018 327h1v1h-1zM1018 298h1v1h-1zM1018 270h1v1h-1zM1018 241h1v1h-1zM1018 213h1v1h-1zM1018 184h1v1h-1zM1046 726h1v1h-1zM1046 698h1v1h-1zM1046 669h1v1h-1zM1046 641h1v1h-1zM1046 612h1v1h-1zM1046 584h1v1h-1zM1046 555h1v1h-1zM1046 527h1v1h-1zM1046 498h1v1h-1zM1046 470h1v1h-1zM1046 441h1v1h-1zM1046 413h1v1h-1zM1046 384h1v1h-1zM1046 355h1v1h-1zM1046 327h1v1h-1zM1046 298h1v1h-1zM1046 270h1v1h-1zM1046 241h1v1h-1zM1046 213h1v1h-1zM1046 184h1v1h-1zM1075 726h1v1h-1zM1075 698h1v1h-1zM1075 669h1v1h-1zM1075 641h1v1h-1zM1075 612h1v1h-1zM1075 584h1v1h-1zM1075 555h1v1h-1zM1075 527h1v1h-1zM1075 498h1v1h-1zM1075 470h1v1h-1zM1075 441h1v1h-1zM1075 413h1v1h-1zM1075 384h1v1h-1zM1075 355h1v1h-1zM1075 327h1v1h-1zM1075 298h1v1h-1zM1075 270h1v1h-1zM1075 241h1v1h-1zM1075 213h1v1h-1zM1075 184h1v1h-1zM1103 726h1v1h-1zM1103 698h1v1h-1zM1103 669h1v1h-1zM1103 641h1v1h-1zM1103 612h1v1h-1zM1103 584h1v1h-1zM1103 555h1v1h-1zM1103 527h1v1h-1zM1103 498h1v1h-1zM1103 470h1v1h-1zM1103 441h1v1h-1zM1103 413h1v1h-1zM1103 384h1v1h-1zM1103 355h1v1h-1zM1103 327h1v1h-1zM1103 298h1v1h-1zM1103 270h1v1h-1zM1103 241h1v1h-1zM1103 213h1v1h-1zM1103 184h1v1h-1zM1132 726h1v1h-1zM1132 698h1v1h-1zM1132 669h1v1h-1zM1132 641h1v1h-1zM1132 612h1v1h-1zM1132 584h1v1h-1zM1132 555h1v1h-1zM1132 527h1v1h-1zM1132 498h1v1h-1zM1132 470h1v1h-1zM1132 441h1v1h-1zM1132 413h1v1h-1zM1132 384h1v1h-1zM1132 355h1v1h-1zM1132 327h1v1h-1zM1132 298h1v1h-1zM1132 270h1v1h-1zM1132 241h1v1h-1zM1132 213h1v1h-1zM1132 184h1v1h-1z"/>
<clipPath id="mc"><rect x="95" y="170" width="1044" height="448.6"/></clipPath><g clip-path="url(#mc)"><g fill="none" stroke="#d0d0d0" stroke-width="1" stroke-linejoin="round">
<polyline points="333.0,290.6 350.5,292.0 351.1,286.6 370.6,288.4"/>
<polyline points="359.3,287.5 361.1,270.4"/>
<polyline points="333.0,297.9 338.6,298.5 337.4,308.0"/>
<polyline points="333.0,308.3 346.9,309.2 389.0,314.5 389.5,313.3 421.5,316.9 412.6,340.5 410.3,350.0"/>
<polyline points="346.9,309.2 348.1,299.7 433.0,308.5 437.5,310.5 440.3,314.0 440.5,319.5"/>
<polyline points="398.4,346.2 410.3,350.3"/>
<polyline points="384.2,354.8 407.9,358.3"/>
<polyline points="436.3,345.3 450.5,340.5 455.3,335.8 463.0,336.4 460.5,354.8"/>
<polyline points="496.0,270.4 504.0,270.8"/>
<polyline points="511.1,270.1 510.5,274.2 560.9,279.6"/>
<polyline points="560.9,286.7 509.9,280.1 507.6,301.5 560.9,308.0"/>
<polyline points="560.9,313.9 504.6,307.4 503.4,319.3"/>
<polyline points="485.6,280.1 497.5,281.6 492.7,316.9"/>
<polyline points="484.8,289.0 495.8,290.5"/>
<polyline points="481.5,306.5 493.5,308.0"/>
<polyline points="473.8,316.9 471.4,334.7"/>
<polyline points="467.3,334.1 560.9,347.1"/>
<polyline points="536.0,327.5 560.9,330.9"/>
<polyline points="536.0,327.5 534.2,341.8"/>
<polyline points="461.5,337.0 465.0,337.6 560.0,348.5"/>
<polyline points="447.7,353.6 485.6,358.4 482.4,384.3 442.0,378.5 445.2,364.1 447.2,364.1 448.5,353.0"/>
<polyline points="462.5,336.4 460.1,354.8"/>
<polyline points="467.3,337.6 464.9,355.4"/>
<polyline points="463.5,340.0 466.5,340.4"/>
<polyline points="463.2,343.0 466.2,343.4"/>
<polyline points="462.9,346.0 465.9,346.4"/>
<polyline points="462.6,349.0 465.6,349.4"/>
<polyline points="462.3,352.0 465.3,352.4"/>
<polyline points="333.0,379.6 380.9,385.3 384.5,354.7 408.2,357.3 410.5,350.0"/>
<polyline points="394.6,355.9 384.5,385.5"/>
<polyline points="409.4,353.6 394.0,397.4"/>
<polyline points="390.4,369.0 402.3,372.5"/>
<polyline points="384.5,385.5 396.3,389.7"/>
<polyline points="409.4,354.1 417.7,360.7"/>
<polyline points="349.0,407.5 392.2,411.6"/>
<polyline points="349.5,414.0 380.3,416.3 378.0,443.6 346.0,439.4 349.5,407.5"/>
<polyline points="354.3,440.6 354.3,447.2 368.5,448.3 369.0,442.0"/>
<polyline points="433.0,377.8 450.0,379.6"/>
<polyline points="433.0,377.8 430.7,418.1 450.0,421.1"/>
<polyline points="424.8,392.0 430.7,393.2"/>
<polyline points="424.8,392.0 422.4,416.3 430.7,418.1"/>
<polyline points="411.7,423.4 440.0,427.0"/>
<polyline points="411.7,428.2 440.0,431.7"/>
<polyline points="448.0,353.5 450.0,354.0"/>
<polyline points="488.2,340.0 558.7,347.2 558.0,354.3 560.6,354.3"/>
<polyline points="440.0,378.5 560.0,393.5"/>
<polyline points="517.6,361.5 554.7,366.7 551.5,392.8"/>
<polyline points="517.6,361.5 515.0,372.6 513.0,373.3 511.7,387.0"/>
<polyline points="503.2,386.3 546.3,392.2 541.1,430.0 522.8,428.0 522.1,430.0 517.0,429.3 500.6,426.7 500.6,414.3 499.3,413.7 503.2,386.3"/>
<polyline points="491.5,424.1 494.8,400.6 500.6,401.3"/>
<polyline points="476.5,384.3 475.2,394.8 472.6,421.5 453.0,418.9 446.0,418.9 446.0,421.0 440.0,421.0"/>
<polyline points="440.0,425.4 476.5,430.0"/>
<polyline points="481.1,431.3 485.0,398.7 490.2,399.3 491.5,390.9 476.5,388.9"/>
<polyline points="476.5,394.8 481.7,395.4 477.2,431.3"/>
<polyline points="546.3,392.8 560.0,394.1"/>
<polyline points="546.0,397.4 560.0,398.7"/>
<polyline points="545.6,402.6 550.8,403.3 546.3,439.0"/>
<polyline points="554.7,405.8 560.0,407.1"/>
<polyline points="554.7,405.8 550.2,439.1 560.0,440.4"/>
<polyline points="480.4,431.3 539.0,437.8 547.0,439.0"/>
<polyline points="440.0,431.9 560.0,445.6"/>
<polyline points="350.1,440.0 377.4,441.8 376.8,451.3 397.5,453.6"/>
<polyline points="405.8,461.9 421.2,462.5 421.8,466.1 450.0,467.8"/>
<polyline points="405.8,461.9 404.6,492.1 440.8,493.3 442.5,467.8"/>
<polyline points="333.0,487.4 385.7,496.3"/>
<polyline points="333.0,499.8 383.3,508.7"/>
<polyline points="404.6,494.5 406.5,498.5 410.0,501.5 427.1,508.5 434.0,511.0"/>
<polyline points="396.3,511.1 408.0,515.5 418.8,521.7 428.0,529.0 439.0,540.0 449.0,551.0 457.0,562.0"/>
<polyline points="424.8,506.3 428.3,503.4 441.3,503.4 443.7,506.3 440.2,509.9 428.3,510.5 424.8,506.3"/>
<polyline points="443.7,506.3 450.0,502.2"/>
<polyline points="443.6,507.0 452.0,500.0 466.1,494.5 560.0,473.8"/>
<polyline points="440.0,467.3 486.2,469.4 489.2,483.8"/>
<polyline points="442.4,467.8 441.2,493.3"/>
<polyline points="524.1,505.2 560.0,509.0 557.3,535.4"/>
<polyline points="524.1,505.2 521.2,530.7 557.3,535.4 559.1,524.1 560.0,524.0"/>
<polyline points="543.7,492.1 549.0,508.1"/>
<polyline points="552.5,503.4 560.0,504.6"/>
<polyline points="520.5,540.0 520.5,535.0 535.4,536.2 535.4,540.0"/>
<polyline points="378.2,618.6 380.8,602.3 411.4,571.0 448.6,567.8 454.3,562.0"/>
<polyline points="411.4,571.7 408.2,591.2 411.4,591.2"/>
<polyline points="412.0,589.3 444.7,595.1 442.2,616.6 447.3,618.6"/>
<polyline points="412.0,591.8 439.5,597.0 436.2,616.0 442.2,616.6"/>
<polyline points="411.4,591.8 407.9,611.4 425.8,615.4 425.8,618.6"/>
<polyline points="407.9,611.4 406.2,618.6"/>
<polyline points="447.9,618.6 450.0,597.5 445.0,596.0"/>
<polyline points="468.7,582.2 459.6,580.9 451.7,590.0 446.5,618.7"/>
<polyline points="492.2,588.7 494.8,579.5 500.0,578.2 560.0,582.2"/>
<polyline points="520.8,535.2 535.8,537.2 533.9,546.3 519.5,544.3 520.8,535.2"/>
<polyline points="520.8,530.0 557.9,534.6 558.7,530.0"/>
<polyline points="572.0,607.0 573.2,616.6 582.8,618.3 584.0,608.2"/>
<polyline points="587.6,607.0 587.6,617.8 609.2,618.3"/>
<polyline points="666.8,608.0 666.8,618.3"/>
<polyline points="671.6,608.0 671.6,618.3"/>
<polyline points="695.6,607.0 699.2,614.2 705.2,615.4 708.8,608.2"/>
<polyline points="725.6,617.8 729.2,608.2"/>
<polyline points="728.0,618.3 731.6,608.2"/>
<polyline points="759.2,608.2 759.2,618.3"/>
<polyline points="777.2,608.2 777.2,618.3"/>
<polyline points="884.0,617.8 898.4,618.3"/>
</g><g fill="none" stroke="#10d0da" stroke-width="1" stroke-linejoin="round">
<polyline points="372.4,270.1 370.6,294.3 449.4,302.4"/>
<polyline points="467.8,270.1 440.0,319.8 428.0,341.0 417.7,357.3 412.9,370.1 404.6,397.4 401.0,421.1 398.7,450.0 394.0,489.8 389.2,495.7 385.7,496.3"/>
<polyline points="453.0,319.3 434.8,350.0 423.6,371.3 416.5,392.6 411.7,421.1 408.8,450.0 405.8,461.3 404.6,494.5 408.8,498.6"/>
<polyline points="457.8,315.1 560.9,326.4"/>
<polyline points="485.6,270.1 479.7,315.7"/>
<polyline points="333.0,390.3 393.4,398.0 404.6,398.8"/>
<polyline points="393.4,398.0 392.2,411.6 403.4,412.2 404.6,398.8"/>
<polyline points="410.5,431.7 440.0,434.6 560.0,447.6"/>
<polyline points="333.0,489.2 385.7,496.9 439.0,498.0 465.5,489.8 560.0,467.3"/>
<polyline points="333.0,500.4 383.3,508.7"/>
<polyline points="401.0,513.4 402.6,618.6"/>
<polyline points="398.7,512.3 418.8,522.3 436.6,540.0 450.0,555.4 494.8,618.7"/>
<polyline points="420.0,498.0 450.4,530.0 512.4,618.7"/>
<polyline points="560.0,488.0 476.7,507.6 465.0,514.0 457.0,522.0 455.4,530.0 457.8,540.0"/>
<polyline points="476.5,567.8 560.0,573.0"/>
<polyline points="690.8,608.2 689.6,618.3"/>
<polyline points="783.2,608.2 782.0,618.3"/>
<polyline points="869.6,608.2 868.4,618.3"/>
</g></g>
<g font-family="Liberation Sans" fill="#d4d400" font-size="8.5">
<text x="349.5" y="465" textLength="20" lengthAdjust="spacingAndGlyphs">2546</text>
<text x="448.5" y="459" textLength="18" lengthAdjust="spacingAndGlyphs">1549</text>
<text x="390.5" y="409" textLength="17.5" lengthAdjust="spacingAndGlyphs">1580</text>
<text x="488.5" y="543.5" textLength="17" lengthAdjust="spacingAndGlyphs">1703</text>
<text x="466" y="617.5" textLength="16" lengthAdjust="spacingAndGlyphs">1953</text>
<text x="550" y="609" textLength="14" lengthAdjust="spacingAndGlyphs">555</text>
<text transform="translate(400.5,429.5) rotate(84)" x="0" y="0" textLength="25" lengthAdjust="spacingAndGlyphs">43506</text>
</g>
<g font-family="Liberation Sans" fill="#b8b8b8" font-size="9">
<text transform="translate(424,365) rotate(-59.5)" textLength="55" lengthAdjust="spacingAndGlyphs">Exercitation</text>
<text transform="translate(470,578) rotate(54.7)" textLength="66" lengthAdjust="spacingAndGlyphs">Minim Veniam</text>
</g>
<g font-family="Liberation Sans" fill="#c03030" font-size="8">
<text transform="translate(387,515) rotate(6)" textLength="37" lengthAdjust="spacingAndGlyphs">32553236</text>
<text transform="translate(458.5,318.5) rotate(4)" textLength="37" lengthAdjust="spacingAndGlyphs">32553284</text>
</g>
<rect x="449.5" y="309.5" width="8" height="8" fill="#1a82b8" stroke="#4aa8d8" stroke-width="1" rx="1.5"/><rect x="453" y="319.3" width="6" height="6" fill="#0a0ab8"/>
<rect x="386.5" y="504" width="8" height="8" fill="#1a82b8" stroke="#4aa8d8" stroke-width="1" rx="1.5"/><rect x="383.3" y="507" width="6" height="6" fill="#0a0ab8"/>
</svg>
<div class="t rl" style="left:90.5px;top:149px;width:30px;text-align:center">70</div>
<div class="a" style="left:105px;top:163px;width:1px;height:7px;background:#666"></div>
<div class="t rl" style="left:118.5px;top:149px;width:30px;text-align:center">80</div>
<div class="a" style="left:133px;top:163px;width:1px;height:7px;background:#666"></div>
<div class="t rl" style="left:147.5px;top:149px;width:30px;text-align:center">90</div>
<div class="a" style="left:162px;top:163px;width:1px;height:7px;background:#666"></div>
<div class="t rl" style="left:175.5px;top:149px;width:30px;text-align:center">100</div>
<div class="a" style="left:190px;top:163px;width:1px;height:7px;background:#666"></div>
<div class="t rl" style="left:204.5px;top:149px;width:30px;text-align:center">110</div>
<div class="a" style="left:219px;top:163px;width:1px;height:7px;background:#666"></div>
<div class="t rl" style="left:232.5px;top:149px;width:30px;text-align:center">120</div>
<div class="a" style="left:247px;top:163px;width:1px;height:7px;background:#666"></div>
<div class="t rl" style="left:261.5px;top:149px;width:30px;text-align:center">130</div>
<div class="a" style="left:276px;top:163px;width:1px;height:7px;background:#666"></div>
<div class="t rl" style="left:289.5px;top:149px;width:30px;text-align:center">140</div>
<div class="a" style="left:304px;top:163px;width:1px;height:7px;background:#666"></div>
<div class="t rl" style="left:318.5px;top:149px;width:30px;text-align:center">150</div>
<div class="a" style="left:333px;top:163px;width:1px;height:7px;background:#666"></div>
<div class="t rl" style="left:346.5px;top:149px;width:30px;text-align:center">160</div>
<div class="a" style="left:361px;top:163px;width:1px;height:7px;background:#666"></div>
<div class="t rl" style="left:375.5px;top:149px;width:30px;text-align:center">170</div>
<div class="a" style="left:390px;top:163px;width:1px;height:7px;background:#666"></div>
<div class="t rl" style="left:404.5px;top:149px;width:30px;text-align:center">180</div>
<div class="a" style="left:419px;top:163px;width:1px;height:7px;background:#666"></div>
<div class="t rl" style="left:432.5px;top:149px;width:30px;text-align:center">190</div>
<div class="a" style="left:447px;top:163px;width:1px;height:7px;background:#666"></div>
<div class="t rl" style="left:461.5px;top:149px;width:30px;text-align:center">200</div>
<div class="a" style="left:476px;top:163px;width:1px;height:7px;background:#666"></div>
<div class="t rl" style="left:489.5px;top:149px;width:30px;text-align:center">210</div>
<div class="a" style="left:504px;top:163px;width:1px;height:7px;background:#666"></div>
<div class="t rl" style="left:518.5px;top:149px;width:30px;text-align:center">220</div>
<div class="a" style="left:533px;top:163px;width:1px;height:7px;background:#666"></div>
<div class="t rl" style="left:546.5px;top:149px;width:30px;text-align:center">230</div>
<div class="a" style="left:561px;top:163px;width:1px;height:7px;background:#666"></div>
<div class="t rl" style="left:575.5px;top:149px;width:30px;text-align:center">240</div>
<div class="a" style="left:590px;top:163px;width:1px;height:7px;background:#666"></div>
<div class="t rl" style="left:603.5px;top:149px;width:30px;text-align:center">250</div>
<div class="a" style="left:618px;top:163px;width:1px;height:7px;background:#666"></div>
<div class="t rl" style="left:632.5px;top:149px;width:30px;text-align:center">260</div>
<div class="a" style="left:647px;top:163px;width:1px;height:7px;background:#666"></div>
<div class="t rl" style="left:660.5px;top:149px;width:30px;text-align:center">270</div>
<div class="a" style="left:675px;top:163px;width:1px;height:7px;background:#666"></div>
<div class="t rl" style="left:689.5px;top:149px;width:30px;text-align:center">280</div>
<div class="a" style="left:704px;top:163px;width:1px;height:7px;background:#666"></div>
<div class="t rl" style="left:717.5px;top:149px;width:30px;text-align:center">290</div>
<div class="a" style="left:732px;top:163px;width:1px;height:7px;background:#666"></div>
<div class="t rl" style="left:746.5px;top:149px;width:30px;text-align:center">300</div>
<div class="a" style="left:761px;top:163px;width:1px;height:7px;background:#666"></div>
<div class="t rl" style="left:774.5px;top:149px;width:30px;text-align:center">310</div>
<div class="a" style="left:789px;top:163px;width:1px;height:7px;background:#666"></div>
<div class="t rl" style="left:803.5px;top:149px;width:30px;text-align:center">320</div>
<div class="a" style="left:818px;top:163px;width:1px;height:7px;background:#666"></div>
<div class="t rl" style="left:831.5px;top:149px;width:30px;text-align:center">330</div>
<div class="a" style="left:846px;top:163px;width:1px;height:7px;background:#666"></div>
<div class="t rl" style="left:860.5px;top:149px;width:30px;text-align:center">340</div>
<div class="a" style="left:875px;top:163px;width:1px;height:7px;background:#666"></div>
<div class="t rl" style="left:888.5px;top:149px;width:30px;text-align:center">350</div>
<div class="a" style="left:903px;top:163px;width:1px;height:7px;background:#666"></div>
<div class="t rl" style="left:917.5px;top:149px;width:30px;text-align:center">360</div>
<div class="a" style="left:932px;top:163px;width:1px;height:7px;background:#666"></div>
<div class="t rl" style="left:946.5px;top:149px;width:30px;text-align:center">370</div>
<div class="a" style="left:961px;top:163px;width:1px;height:7px;background:#666"></div>
<div class="t rl" style="left:974.5px;top:149px;width:30px;text-align:center">380</div>
<div class="a" style="left:989px;top:163px;width:1px;height:7px;background:#666"></div>
<div class="t rl" style="left:1003.5px;top:149px;width:30px;text-align:center">390</div>
<div class="a" style="left:1018px;top:163px;width:1px;height:7px;background:#666"></div>
<div class="t rl" style="left:1031.5px;top:149px;width:30px;text-align:center">400</div>
<div class="a" style="left:1046px;top:163px;width:1px;height:7px;background:#666"></div>
<div class="t rl" style="left:1060.5px;top:149px;width:30px;text-align:center">410</div>
<div class="a" style="left:1075px;top:163px;width:1px;height:7px;background:#666"></div>
<div class="t rl" style="left:1088.5px;top:149px;width:30px;text-align:center">420</div>
<div class="a" style="left:1103px;top:163px;width:1px;height:7px;background:#666"></div>
<div class="t rl" style="left:1117.5px;top:149px;width:30px;text-align:center">430</div>
<div class="a" style="left:1132px;top:163px;width:1px;height:7px;background:#666"></div>
<div class="t rl" style="left:63.5px;top:722.0px;width:30px;height:9px;text-align:center;transform:rotate(-90deg);transform-origin:15px 4.5px">90</div>
<div class="a" style="left:88px;top:726px;width:7px;height:1px;background:#666"></div>
<div class="t rl" style="left:63.5px;top:694.0px;width:30px;height:9px;text-align:center;transform:rotate(-90deg);transform-origin:15px 4.5px">100</div>
<div class="a" style="left:88px;top:698px;width:7px;height:1px;background:#666"></div>
<div class="t rl" style="left:63.5px;top:665.0px;width:30px;height:9px;text-align:center;transform:rotate(-90deg);transform-origin:15px 4.5px">110</div>
<div class="a" style="left:88px;top:669px;width:7px;height:1px;background:#666"></div>
<div class="t rl" style="left:63.5px;top:637.0px;width:30px;height:9px;text-align:center;transform:rotate(-90deg);transform-origin:15px 4.5px">120</div>
<div class="a" style="left:88px;top:641px;width:7px;height:1px;background:#666"></div>
<div class="t rl" style="left:63.5px;top:608.0px;width:30px;height:9px;text-align:center;transform:rotate(-90deg);transform-origin:15px 4.5px">130</div>
<div class="a" style="left:88px;top:612px;width:7px;height:1px;background:#666"></div>
<div class="t rl" style="left:63.5px;top:580.0px;width:30px;height:9px;text-align:center;transform:rotate(-90deg);transform-origin:15px 4.5px">140</div>
<div class="a" style="left:88px;top:584px;width:7px;height:1px;background:#666"></div>
<div class="t rl" style="left:63.5px;top:551.0px;width:30px;height:9px;text-align:center;transform:rotate(-90deg);transform-origin:15px 4.5px">150</div>
<div class="a" style="left:88px;top:555px;width:7px;height:1px;background:#666"></div>
<div class="t rl" style="left:63.5px;top:523.0px;width:30px;height:9px;text-align:center;transform:rotate(-90deg);transform-origin:15px 4.5px">160</div>
<div class="a" style="left:88px;top:527px;width:7px;height:1px;background:#666"></div>
<div class="t rl" style="left:63.5px;top:494.0px;width:30px;height:9px;text-align:center;transform:rotate(-90deg);transform-origin:15px 4.5px">170</div>
<div class="a" style="left:88px;top:498px;width:7px;height:1px;background:#666"></div>
<div class="t rl" style="left:63.5px;top:466.0px;width:30px;height:9px;text-align:center;transform:rotate(-90deg);transform-origin:15px 4.5px">180</div>
<div class="a" style="left:88px;top:470px;width:7px;height:1px;background:#666"></div>
<div class="t rl" style="left:63.5px;top:437.0px;width:30px;height:9px;text-align:center;transform:rotate(-90deg);transform-origin:15px 4.5px">190</div>
<div class="a" style="left:88px;top:441px;width:7px;height:1px;background:#666"></div>
<div class="t rl" style="left:63.5px;top:409.0px;width:30px;height:9px;text-align:center;transform:rotate(-90deg);transform-origin:15px 4.5px">200</div>
<div class="a" style="left:88px;top:413px;width:7px;height:1px;background:#666"></div>
<div class="t rl" style="left:63.5px;top:380.0px;width:30px;height:9px;text-align:center;transform:rotate(-90deg);transform-origin:15px 4.5px">210</div>
<div class="a" style="left:88px;top:384px;width:7px;height:1px;background:#666"></div>
<div class="t rl" style="left:63.5px;top:351.0px;width:30px;height:9px;text-align:center;transform:rotate(-90deg);transform-origin:15px 4.5px">220</div>
<div class="a" style="left:88px;top:355px;width:7px;height:1px;background:#666"></div>
<div class="t rl" style="left:63.5px;top:323.0px;width:30px;height:9px;text-align:center;transform:rotate(-90deg);transform-origin:15px 4.5px">230</div>
<div class="a" style="left:88px;top:327px;width:7px;height:1px;background:#666"></div>
<div class="t rl" style="left:63.5px;top:294.0px;width:30px;height:9px;text-align:center;transform:rotate(-90deg);transform-origin:15px 4.5px">240</div>
<div class="a" style="left:88px;top:298px;width:7px;height:1px;background:#666"></div>
<div class="t rl" style="left:63.5px;top:266.0px;width:30px;height:9px;text-align:center;transform:rotate(-90deg);transform-origin:15px 4.5px">250</div>
<div class="a" style="left:88px;top:270px;width:7px;height:1px;background:#666"></div>
<div class="t rl" style="left:63.5px;top:237.0px;width:30px;height:9px;text-align:center;transform:rotate(-90deg);transform-origin:15px 4.5px">260</div>
<div class="a" style="left:88px;top:241px;width:7px;height:1px;background:#666"></div>
<div class="t rl" style="left:63.5px;top:209.0px;width:30px;height:9px;text-align:center;transform:rotate(-90deg);transform-origin:15px 4.5px">270</div>
<div class="a" style="left:88px;top:213px;width:7px;height:1px;background:#666"></div>
<div class="t rl" style="left:63.5px;top:180.0px;width:30px;height:9px;text-align:center;transform:rotate(-90deg);transform-origin:15px 4.5px">280</div>
<div class="a" style="left:88px;top:184px;width:7px;height:1px;background:#666"></div>
<svg class="a" style="left:1009px;top:160px" width="13" height="7"><path d="M0.5 0.5h12l-6 6z" fill="#000"/></svg>
<svg class="a" style="left:85px;top:227px" width="7" height="13"><path d="M0.5 0.5v12l6-6z" fill="#000"/></svg>
<div class="a" style="left:1139px;top:147px;width:14px;height:585px;background:#f8f8f8"></div>
<div class="a" style="left:1143px;top:317px;width:8px;height:267px;background:#8a8a8a;border-radius:4px"></div>
<div class="a" style="left:95px;top:732px;width:988px;height:16px;background:#f6f6f6"></div>
<div class="a" style="left:215px;top:736px;width:748px;height:8px;background:#808080;border-radius:4px"></div>
<div class="t" style="left:1103px;top:734px;font-size:13px">10 &lt; 100</div>
<div class="a" style="left:72px;top:748px;width:1081px;height:23px;background:#fff;border-top:1px solid #c6c6c6;border-bottom:1px solid #c6c6c6"></div>
<div class="a" style="left:1138px;top:749px;width:15px;height:21px;background:#f8f8f8"></div>
<div class="a" style="left:1142px;top:750px;width:8px;height:17px;background:#8a8a8a;border-radius:4px"></div>
<div class="t" style="left:77px;top:752px;font-size:13.5px;color:#0c22d8"><i>Commande:</i> layeradd</div>
<div class="t" style="left:73px;top:779px;font-size:13.5px;color:#111">Commande :</div>
<div class="a" style="left:153px;top:776px;width:974px;height:18px;background:#fff"></div>
<div class="a" style="left:1127px;top:772px;width:26px;height:26px;border:1px solid #b8b8b8;background:linear-gradient(#f4f4f4,#e4e4e4)"></div>

<!-- RIGHT PANEL -->
<div class="a" style="left:1153px;top:122px;width:302px;height:676px;background:#ececec"></div>
<div class="a" style="left:0;top:121px;width:1500px;height:2px;background:#bfbfbf"></div>
<svg class="a" style="left:1157px;top:126px" width="14" height="14" viewBox="0 0 14 14"><circle cx="7" cy="7" r="6.8" fill="#636363"/><path d="M4.6 4.6l4.8 4.8M9.4 4.6l-4.8 4.8" stroke="#fff" stroke-width="1.6"/></svg><svg class="a" style="left:1175px;top:126px" width="14" height="14" viewBox="0 0 14 14"><circle cx="7" cy="7" r="6.8" fill="#636363"/><path d="M5.6 5.6V4h4.9v3.9H8.6" fill="none" stroke="#fff" stroke-width="1.1"/><rect x="3.4" y="6" width="5" height="3.9" fill="#555" stroke="#fff" stroke-width="1.1"/></svg>
<div class="t" style="left:1277px;top:128px;font-size:12px;color:#2a2a2a">Liste des calques</div>
<div class="a" style="left:1155px;top:143px;width:300px;height:1px;background:#dcdcdc"></div>
<div class="a" style="left:1155px;top:145px;width:60px;height:26px;border:1px solid #b4b4b4;background:linear-gradient(#f7f7f7,#e6e6e6)"></div><div class="a" style="left:1215px;top:145px;width:60px;height:26px;border:1px solid #b4b4b4;background:linear-gradient(#f7f7f7,#e6e6e6)"></div><div class="a" style="left:1335px;top:145px;width:60px;height:26px;border:1px solid #b4b4b4;background:linear-gradient(#f7f7f7,#e6e6e6)"></div><div class="a" style="left:1395px;top:145px;width:60px;height:26px;border:1px solid #b4b4b4;background:linear-gradient(#f7f7f7,#e6e6e6)"></div>
<div class="a" style="left:1275px;top:145px;width:60px;height:26px;background:#b6b6b6;border-radius:5px"></div>
<svg class="a" style="left:1177px;top:151px" width="16" height="12" viewBox="0 0 16 12"><path d="M1.2 6.2C3.5 2.2 6 1 8.2 1s4.8 1.2 6.8 5c-2 3.6-4.5 4.8-6.8 4.8S3.5 9.8 1.2 6.2z" fill="#fff" stroke="#000" stroke-width="1.7"/><path d="M2.2 5C5 1.2 11.2 1.2 14 5" fill="none" stroke="#000" stroke-width="1.8"/><circle cx="8.2" cy="5.8" r="3.1" fill="#000"/></svg>
<svg class="a" style="left:1237px;top:151px" width="16" height="12" viewBox="0 0 16 12"><path d="M1.2 6.2C3.5 2.2 6 1 8.2 1s4.8 1.2 6.8 5c-2 3.6-4.5 4.8-6.8 4.8S3.5 9.8 1.2 6.2z" fill="#f4f4f4" stroke="#a4a4a4" stroke-width="1.7"/><path d="M2.2 5C5 1.2 11.2 1.2 14 5" fill="none" stroke="#a4a4a4" stroke-width="1.8"/><circle cx="8.2" cy="5.8" r="3.1" fill="#a4a4a4"/></svg>
<svg class="a" style="left:1298px;top:151px" width="14" height="14" viewBox="0 0 14 14"><path d="M5.6 1h2.8v4.6H13v2.8H8.4V13H5.6V8.4H1V5.6h4.6z" fill="#f00000" stroke="#6a0000" stroke-width=".6"/></svg>
<div class="a" style="left:1358px;top:156px;width:13px;height:3.5px;background:#f00000;box-shadow:0 0 0 .5px #800"></div>
<svg class="a" style="left:1417px;top:149px" width="16" height="16" viewBox="0 0 16 16"><path d="M2 14.5l1-3.5 9-9 2.5 2.5-9 9z" fill="#f0b030" stroke="#8a5a10" stroke-width="0.7"/><path d="M12 2l2.5 2.5 0.8-0.8a1.2 1.2 0 0 0 0-1.7l-0.8-0.8a1.2 1.2 0 0 0-1.7 0z" fill="#e03020"/><path d="M2 14.5l1-3.5 2.5 2.5z" fill="#f5d9a8"/></svg>
<div class="a" style="left:1155px;top:172px;width:300px;height:387px;background:#fff;border:1px solid #d4d4d4"></div>
<div class="a" style="left:1156px;top:193px;width:298px;height:20px;background:#0b48d6"></div>
<div class="a" style="left:1181px;top:179px;width:16px;height:10px;background:#fff;border:1px solid #000"></div>
<div class="a" style="left:1181px;top:199px;width:16px;height:9px;background:#3a4150"></div>
<div class="a" style="left:1181px;top:219px;width:16px;height:9px;background:#000"></div>
<div class="t" style="left:1203px;top:176px;font-size:13.4px;color:#111">0</div>
<div class="t" style="left:1203px;top:196px;font-size:13.4px;color:#fff">Numéros cadastraux</div>
<div class="t" style="left:1203px;top:216px;font-size:13.4px;color:#111">Texte</div>
<svg class="a" style="left:1415px;top:177px" width="16" height="12" viewBox="0 0 16 12"><path d="M1.2 6.2C3.5 2.2 6 1 8.2 1s4.8 1.2 6.8 5c-2 3.6-4.5 4.8-6.8 4.8S3.5 9.8 1.2 6.2z" fill="none" stroke="#000" stroke-width="1.7"/><path d="M2.2 5C5 1.2 11.2 1.2 14 5" fill="none" stroke="#000" stroke-width="1.8"/><circle cx="8.2" cy="5.8" r="3.1" fill="#000"/><path d="M7.4 4.6l1 1" stroke="#888" stroke-width=".7"/></svg><svg class="a" style="left:1415px;top:197px" width="16" height="12" viewBox="0 0 16 12"><path d="M1.2 6.2C3.5 2.2 6 1 8.2 1s4.8 1.2 6.8 5c-2 3.6-4.5 4.8-6.8 4.8S3.5 9.8 1.2 6.2z" fill="none" stroke="#000" stroke-width="1.7"/><path d="M2.2 5C5 1.2 11.2 1.2 14 5" fill="none" stroke="#000" stroke-width="1.8"/><circle cx="8.2" cy="5.8" r="3.1" fill="#000"/><path d="M7.4 4.6l1 1" stroke="#888" stroke-width=".7"/></svg><svg class="a" style="left:1415px;top:217px" width="16" height="12" viewBox="0 0 16 12"><path d="M1.2 6.2C3.5 2.2 6 1 8.2 1s4.8 1.2 6.8 5c-2 3.6-4.5 4.8-6.8 4.8S3.5 9.8 1.2 6.2z" fill="none" stroke="#000" stroke-width="1.7"/><path d="M2.2 5C5 1.2 11.2 1.2 14 5" fill="none" stroke="#000" stroke-width="1.8"/><circle cx="8.2" cy="5.8" r="3.1" fill="#000"/><path d="M7.4 4.6l1 1" stroke="#888" stroke-width=".7"/></svg><svg class="a" style="left:1440px;top:176px" width="11" height="14" viewBox="0 0 11 14"><path d="M1.8 6.8V4.6a3.7 3.7 0 0 1 7.4 0v2.2" fill="none" stroke="#bdbdbd" stroke-width="1.2"/><rect x="0.3" y="6.4" width="10.2" height="7.4" fill="#b8b8b8"/></svg><svg class="a" style="left:1440px;top:196px" width="11" height="14" viewBox="0 0 11 14"><path d="M1.8 6.8V4.6a3.7 3.7 0 0 1 7.4 0v2.2" fill="none" stroke="#bdbdbd" stroke-width="1.2"/><rect x="0.3" y="6.4" width="10.2" height="7.4" fill="#b8b8b8"/></svg><svg class="a" style="left:1440px;top:216px" width="11" height="14" viewBox="0 0 11 14"><path d="M1.8 6.8V4.6a3.7 3.7 0 0 1 7.4 0v2.2" fill="none" stroke="#bdbdbd" stroke-width="1.2"/><rect x="0.3" y="6.4" width="10.2" height="7.4" fill="#b8b8b8"/></svg>
<svg class="a" style="left:1394px;top:195px" width="15" height="15" viewBox="0 0 16 16"><path d="M1.5 14.5l1-3.5 9-9 2.5 2.5-9 9z" fill="#f0b030" stroke="#8a5a10" stroke-width="0.7"/><path d="M11.5 2l2.5 2.5 0.8-0.8a1.2 1.2 0 0 0 0-1.7l-0.8-0.8a1.2 1.2 0 0 0-1.7 0z" fill="#e03020"/></svg>
<!-- FILTER -->
<div class="a" style="left:1155px;top:558px;width:300px;height:2px;background:#ececec"></div>
<svg class="a" style="left:1157px;top:562px" width="14" height="14" viewBox="0 0 14 14"><circle cx="7" cy="7" r="6.8" fill="#636363"/><path d="M4.6 4.6l4.8 4.8M9.4 4.6l-4.8 4.8" stroke="#fff" stroke-width="1.6"/></svg><svg class="a" style="left:1175px;top:562px" width="14" height="14" viewBox="0 0 14 14"><circle cx="7" cy="7" r="6.8" fill="#636363"/><path d="M5.6 5.6V4h4.9v3.9H8.6" fill="none" stroke="#fff" stroke-width="1.1"/><rect x="3.4" y="6" width="5" height="3.9" fill="#555" stroke="#fff" stroke-width="1.1"/></svg>
<div class="t" style="left:1276px;top:564.5px;font-size:12px;color:#2a2a2a">Filtre de sélection</div>
<div class="a" style="left:1155px;top:580px;width:300px;height:2px;background:#d8d8d8"></div>
<div class="a" style="left:1167px;top:594px;width:276px;height:135px;background:#e4e4e4;border-top:1px solid #dadada"></div>
<div class="t" style="left:1174px;top:586px;font-size:11.5px;color:#222">Filtre</div>
<div class="t lbl" style="left:1182px;top:619px">Type :</div>
<div class="t lbl" style="left:1182px;top:645px">Propriété :</div>
<div class="t lbl" style="left:1182px;top:671px">Comparaison :</div>
<div class="t lbl" style="left:1182px;top:697px">Valeur :</div>
<div class="combo" style="left:1277px;top:614px;width:151px;height:22px"><svg class="a" style="right:2px;top:2px" width="16" height="16"><rect width="16" height="16" rx="4" fill="#1a7cf6"/><path d="M5 6.5l3-3 3 3M5 9.5l3 3 3-3" stroke="#fff" stroke-width="1.3" fill="none"/></svg></div>
<div class="combo" style="left:1277px;top:640px;width:151px;height:22px"><svg class="a" style="right:2px;top:2px" width="16" height="16"><rect width="16" height="16" rx="4" fill="#1a7cf6"/><path d="M5 6.5l3-3 3 3M5 9.5l3 3 3-3" stroke="#fff" stroke-width="1.3" fill="none"/></svg></div>
<div class="combo" style="left:1277px;top:666px;width:151px;height:22px"><svg class="a" style="right:2px;top:2px" width="16" height="16"><rect width="16" height="16" rx="4" fill="#1a7cf6"/><path d="M5 6.5l3-3 3 3M5 9.5l3 3 3-3" stroke="#fff" stroke-width="1.3" fill="none"/></svg></div>
<div class="a" style="left:1277px;top:693px;width:151px;height:20px;background:#fff;border:1px solid #d8d8d8"></div>
<div class="t lbl" style="left:1281px;top:619px">Cercle</div>
<div class="t lbl" style="left:1281px;top:645px">Diamètre</div>
<div class="t lbl" style="left:1281px;top:671px">= (égal à)</div>
<div class="t lbl" style="left:1279px;top:697px">1</div>
<div class="a" style="left:1167px;top:744px;width:276px;height:26px;border:1px solid #b4b4b4;background:linear-gradient(#f7f7f7,#e6e6e6)"></div>
<div class="a" style="left:1235px;top:744px;width:1px;height:26px;background:#b4b4b4"></div>
<div class="a" style="left:1304px;top:744px;width:1px;height:26px;background:#b4b4b4"></div>
<div class="a" style="left:1373px;top:744px;width:1px;height:26px;background:#b4b4b4"></div>
<svg class="a" style="left:1193px;top:750px" width="16" height="15"><rect x="1.5" y="1.5" width="12" height="12" fill="#f89a9a" stroke="#333" stroke-width="0.8" stroke-dasharray="1.2 1.2"/></svg>
<svg class="a" style="left:1262px;top:749px" width="18" height="17"><rect x="5.5" y="5.5" width="10" height="10" fill="#f89a9a" stroke="#333" stroke-width="0.8" stroke-dasharray="1.2 1.2"/><rect x="1.5" y="1.5" width="10" height="10" fill="#f89a9a" stroke="#333" stroke-width="0.9"/></svg>
<svg class="a" style="left:1331px;top:749px" width="18" height="17"><rect x="5.5" y="5.5" width="10" height="10" fill="#fff" stroke="#333" stroke-width="0.8" stroke-dasharray="1.2 1.2"/><rect x="1.5" y="1.5" width="10" height="10" fill="#f89a9a" stroke="#333" stroke-width="0.9"/><rect x="5.5" y="5.5" width="6" height="6" fill="#fff"/></svg>
<svg class="a" style="left:1400px;top:749px" width="18" height="17"><rect x="5.5" y="5.5" width="10" height="10" fill="#fff" stroke="#333" stroke-width="0.8" stroke-dasharray="1.2 1.2"/><rect x="1.5" y="1.5" width="10" height="10" fill="#fff" stroke="#333" stroke-width="0.9"/><rect x="5.5" y="5.5" width="6" height="6" fill="#f89a9a"/></svg>
<!-- DOCK -->
<div class="a" style="left:1455px;top:122px;width:45px;height:676px;background:linear-gradient(90deg,#f6f6f6,#dedede 50%,#cdcdcd 93%,#bababa 95%,#c0c0c0)"></div>

<!-- STATUS -->
<div class="a" style="left:0;top:798px;width:1500px;height:46px;background:#dcdcdc"></div>
<div class="t" style="left:2px;top:808px;font-size:10.2px;letter-spacing:.15px">388.8283,263.0916</div>
<div class="t" style="left:2px;top:828px;font-size:10.2px;letter-spacing:.15px">@388.8283,263.0916</div>
<div class="a" style="left:253px;top:802px;width:1px;height:40px;background:#9a9a9a"></div>
<div class="t" style="left:256px;top:808px;font-size:10.2px;letter-spacing:.15px">469.4727&lt;34°</div>
<div class="t" style="left:256px;top:828px;font-size:10.2px;letter-spacing:.15px">@469.4727&lt;34°</div>
<div class="t" style="left:532px;top:817.5px;font-size:10.2px;letter-spacing:.1px">Sélectionne une entité ou une région</div>
<div class="t" style="left:949px;top:811.5px;font-size:10.2px;letter-spacing:.1px">Entités sélectionnées :</div>
<div class="t" style="left:949px;top:822.5px;font-size:10.2px;letter-spacing:.1px">10 entités sur 2 calques.</div>

<!-- DOCK ICONS -->
<div class="a" style="left:1462px;top:131px;width:27px;height:2px;background:repeating-linear-gradient(90deg,#a8a8a8 0 2px,transparent 2px 5px)"></div>
<div class="a" style="left:1456px;top:135px;width:42px;height:43px;background:#b8b8b8;border-radius:6px"></div>
<div class="a" style="left:1456px;top:330px;width:42px;height:43px;background:#b8b8b8;border-radius:6px"></div>
<div class="a" style="left:1456px;top:433px;width:42px;height:43px;background:#b8b8b8;border-radius:6px"></div>
<div class="a" style="left:1458px;top:276px;width:40px;height:1px;background:repeating-linear-gradient(90deg,#777 0 1px,transparent 1px 3px)"></div>
<div class="a" style="left:1458px;top:425px;width:40px;height:1px;background:repeating-linear-gradient(90deg,#777 0 1px,transparent 1px 3px)"></div>
<div class="a" style="left:1458px;top:529px;width:40px;height:1px;background:repeating-linear-gradient(90deg,#777 0 1px,transparent 1px 3px)"></div>
<svg class="a" style="left:1455px;top:130px" width="45" height="450" viewBox="1455 130 45 450">
<defs><g id="win"><rect x="0.5" y="0.5" width="27" height="27" fill="#fff" stroke="#111" stroke-width="1"/><rect x="0.5" y="0.5" width="27" height="4.5" fill="#000"/><rect x="2" y="1.5" width="2.5" height="2.5" fill="#fff"/></g></defs>
<use href="#win" x="1463" y="142"/>
<use href="#win" x="1463" y="189"/>
<use href="#win" x="1463" y="235"/>
<use href="#win" x="1463" y="291"/>
<use href="#win" x="1463" y="337"/>
<use href="#win" x="1463" y="384"/>
<use href="#win" x="1463" y="440"/>
<use href="#win" x="1463" y="487"/>
<!-- layer icon -->
<path d="M1469.5 154.5l5-3v10l-5 3z" fill="#9a9a9a" stroke="#444" stroke-width=".6"/><path d="M1472 153l5-3v10l-5 3z" fill="#bbb" stroke="#444" stroke-width=".6"/>
<path d="M1475 151l8.5-4v11l-8.5 4z" fill="#fff" stroke="#333" stroke-width=".7"/><path d="M1477.5 157.5l3.5-6.5v5.5z" fill="none" stroke="#e02020" stroke-width=".8"/>
<!-- block -->
<rect x="1470" y="196.5" width="10" height="8" fill="#fdf0c0" stroke="#333" stroke-width=".8"/><circle cx="1478.5" cy="204" r="4.8" fill="#fdf0c0" stroke="#333" stroke-width=".8"/>
<!-- empty window -->
<rect x="1469.5" y="245.5" width="15" height="11" rx="2" fill="#eef2f8" stroke="#b8c8e0" stroke-width=".8"/>
<!-- list -->
<rect x="1466" y="299" width="4" height="3" fill="#000"/><rect x="1466" y="304" width="4" height="3" fill="#000"/><rect x="1466" y="309" width="4" height="3" fill="#000"/>
<rect x="1473.5" y="299" width="14" height="3" fill="#fff" stroke="#333" stroke-width=".7"/><rect x="1473.5" y="304" width="14" height="3" fill="#fff" stroke="#333" stroke-width=".7"/><rect x="1473.5" y="309" width="14" height="3" fill="#fff" stroke="#333" stroke-width=".7"/>
<!-- filter funnel -->
<path d="M1470 345h14l-5 6v8l-3 1.5v-9.5z" fill="#d8d8d8" stroke="#444" stroke-width=".8"/><ellipse cx="1477" cy="345.5" rx="7" ry="1.5" fill="#999" stroke="#444" stroke-width=".6"/>
<!-- block (flashlight) -->
<path d="M1468 391.5l7 4v9l-7 4z" fill="#fff" stroke="#333" stroke-width=".8"/><rect x="1475" y="395.5" width="9" height="9" rx="2" fill="#777" stroke="#333" stroke-width=".7"/><path d="M1466 400h23" stroke="#f06060" stroke-width=".8" stroke-dasharray="1.5 1"/>
<!-- command window -->
<path d="M1466 449h8M1466 452.5h9M1466 456h10M1466 459.5h10" stroke="#777" stroke-width=".8"/><path d="M1464 463.5h26" stroke="#333" stroke-width=".6"/><path d="M1467 465.5h2M1475 465.5h12" stroke="#555" stroke-width=".8"/>
<!-- clipboard -->
<rect x="1469" y="495" width="16" height="17" rx="1" fill="#c8882a" stroke="#8a5a18" stroke-width=".6"/><rect x="1471" y="497" width="12" height="13" fill="#fafafa"/><path d="M1473 500h8M1473 503h8M1473 506h6" stroke="#bbb" stroke-width=".8"/><rect x="1474" y="493.5" width="6" height="3" fill="#888"/>
<!-- 3D -->
<path d="M1465 549.8H1471A3.6 3.6 0 0 1 1471 557H1467.3M1471 557A4.15 4.15 0 0 1 1471 565.3H1465" fill="none" stroke="#111" stroke-width="1.5"/><path d="M1478.6 548.9V565.3H1483.6A5.6 5.6 0 0 0 1489.2 559.7V554.5A5.6 5.6 0 0 0 1483.6 548.9Z" fill="none" stroke="#111" stroke-width="1.5"/>
</svg>
<!-- doc icon -->
<svg class="a" style="left:95px;top:127px" width="15" height="15" viewBox="0 0 15 15"><circle cx="7" cy="6.8" r="5.6" fill="#f4f4fa" stroke="#34448c" stroke-width="1.9"/><path d="M3.8 8.5l2.5-3.5 2 2.5M4 5h6" stroke="#d06060" stroke-width=".5" fill="none"/><path d="M7 7l5 5" stroke="#f0c020" stroke-width="2"/><path d="M11.8 11.8l1.6 1.6" stroke="#e06060" stroke-width="2"/></svg>
<!-- status bar extras -->
<div class="a" style="left:506px;top:819px;width:6px;height:6px;border-radius:3px;background:#c4c4c4"></div>
<div class="a" style="left:940px;top:819px;width:6px;height:6px;border-radius:3px;background:#c4c4c4"></div>
<div class="a" style="left:1269px;top:819px;width:6px;height:6px;border-radius:3px;background:#c4c4c4"></div>
<svg class="a" style="left:716px;top:805px" width="21" height="32" viewBox="0 0 21 32"><path d="M10.5 1C5 1 1.5 4.5 1.5 10v11c0 5.5 3.5 9.5 9 9.5s9-4 9-9.5V10c0-5.5-3.5-9-9-9z" fill="#fff" stroke="#333" stroke-width="1"/><path d="M1.5 13h18M10.5 1v12" stroke="#333" stroke-width=".9"/><rect x="8.5" y="4" width="4" height="7" rx="2" fill="#fff" stroke="#333" stroke-width=".9"/></svg>
<svg class="a" style="left:1132px;top:779px" width="16" height="12"><rect x="0.5" y="0.5" width="15" height="10" fill="#f4f4f4" stroke="#333" stroke-width="1"/><rect x="0.5" y="0.5" width="15" height="3" fill="#111"/><rect x="11" y="1.2" width="1.5" height="1.5" fill="#fff"/></svg>

<!-- DIALOG -->
<div class="a" style="left:560px;top:235px;width:379px;height:373px;background:#ececec;border:3px solid #acacac;border-left-width:2.5px;border-radius:3px;box-shadow:inset 0 0 0 1px #f3f3f3"></div>
<div class="t lbl" style="left:582px;top:262px">Calque parent :</div>
<div class="combo" style="left:689px;top:257px;width:228px;height:22px"><svg class="a" style="right:2px;top:2px" width="16" height="16"><rect width="16" height="16" rx="4" fill="#1a7cf6"/><path d="M5 6.5l3-3 3 3M5 9.5l3 3 3-3" stroke="#fff" stroke-width="1.3" fill="none"/></svg></div>
<div class="t lbl" style="left:582px;top:294px">Nom du calque :</div>
<div class="a" style="left:689px;top:289px;width:228px;height:21px;background:#fff;border:1px solid #d4d4d4;border-top-color:#c4c4c4"></div>
<div class="t lbl" style="left:691px;top:294px">Points de référence</div>
<div class="a" style="left:582px;top:325px;width:335px;height:167px;background:#e3e3e3;border-top:1px solid #d6d6d6"></div>
<div class="t" style="left:589px;top:316px;font-size:11.8px;color:#222">Attributs</div>
<div class="t lbl" style="left:563px;width:150px;text-align:right;top:349px">Couleur :</div>
<div class="t lbl" style="left:563px;width:150px;text-align:right;top:381px">Epaisseur de ligne :</div>
<div class="t lbl" style="left:563px;width:150px;text-align:right;top:413px">Type de ligne :</div>
<div class="combo" style="left:722px;top:344px;width:180px;height:22px"><svg class="a" style="right:2px;top:2px" width="16" height="16"><rect width="16" height="16" rx="4" fill="#1a7cf6"/><path d="M5 6.5l3-3 3 3M5 9.5l3 3 3-3" stroke="#fff" stroke-width="1.3" fill="none"/></svg></div>
<div class="combo" style="left:722px;top:376px;width:180px;height:22px"><svg class="a" style="right:2px;top:2px" width="16" height="16"><rect width="16" height="16" rx="4" fill="#1a7cf6"/><path d="M5 6.5l3-3 3 3M5 9.5l3 3 3-3" stroke="#fff" stroke-width="1.3" fill="none"/></svg></div>
<div class="combo" style="left:722px;top:408px;width:180px;height:22px"><svg class="a" style="right:2px;top:2px" width="16" height="16"><rect width="16" height="16" rx="4" fill="#1a7cf6"/><path d="M5 6.5l3-3 3 3M5 9.5l3 3 3-3" stroke="#fff" stroke-width="1.3" fill="none"/></svg></div>
<div class="a" style="left:726px;top:350px;width:16px;height:10px;background:#000"></div>
<div class="t lbl" style="left:748px;top:349px">Noir</div>
<div class="a" style="left:726px;top:386px;width:16px;height:1px;background:#333"></div>
<div class="t lbl" style="left:748px;top:381px">0.25mm (ISO)</div>
<div class="t lbl" style="left:726px;top:412px">Continu</div>
<svg class="a" style="left:597px;top:440px" width="14" height="14"><rect width="14" height="14" rx="3" fill="#1a7cf6"/><path d="M3.2 7.3l2.6 2.9 5-6.6" stroke="#fff" stroke-width="2" fill="none" stroke-linecap="round" stroke-linejoin="round"/></svg>
<div class="t lbl" style="left:615px;top:441px">Traçable</div>
<svg class="a" style="left:597px;top:463px" width="14" height="14"><rect width="14" height="14" rx="3" fill="#1a7cf6"/><path d="M3.2 7.3l2.6 2.9 5-6.6" stroke="#fff" stroke-width="2" fill="none" stroke-linecap="round" stroke-linejoin="round"/></svg>
<div class="t lbl" style="left:615px;top:464px">Accrochable</div>
<svg class="a" style="left:582px;top:507px" width="14" height="14"><rect width="14" height="14" rx="3" fill="#1a7cf6"/><path d="M3.2 7.3l2.6 2.9 5-6.6" stroke="#fff" stroke-width="2" fill="none" stroke-linecap="round" stroke-linejoin="round"/></svg>
<div class="t lbl" style="left:600px;top:508px;font-size:13.4px">Déplacer la sélection vers le nouveau calque</div>
<div class="a" style="left:758px;top:567px;width:75px;height:20px;background:#fff;border-radius:5px;box-shadow:0 0 0 0.5px rgba(0,0,0,.2),0 1px 1px rgba(0,0,0,.15)"></div>
<div class="t lbl" style="left:773px;top:570px">Annuler</div>
<div class="a" style="left:849px;top:567px;width:67px;height:20px;background:linear-gradient(#2a8cff,#0a78fe);border-radius:5px;box-shadow:0 1px 1px rgba(0,0,0,.15)"></div>
<div class="t lbl" style="left:874px;top:570px;color:#fff">OK</div>
<svg class="a" style="left:710px;top:470px" width="90" height="90"><circle cx="43" cy="43.4" r="37.3" fill="none" stroke="#a4b8cc" stroke-opacity=".85" stroke-width="3"/><circle cx="43" cy="43.4" r="34.5" fill="none" stroke="#c4d2e0" stroke-opacity=".6" stroke-width="3"/><circle cx="43" cy="43.4" r="32" fill="none" stroke="#dde6ee" stroke-opacity=".5" stroke-width="2"/></svg>
<svg class="a" style="left:752px;top:513px" width="18" height="28" viewBox="-1 -1 18 28"><path d="M0.5 0.5V21.5L5 17.2L8.2 24.3L11 23.1L7.9 16.1H14.8Z" fill="#fff" stroke="#000" stroke-width="1.2" stroke-linejoin="round"/></svg>
</body></html>
